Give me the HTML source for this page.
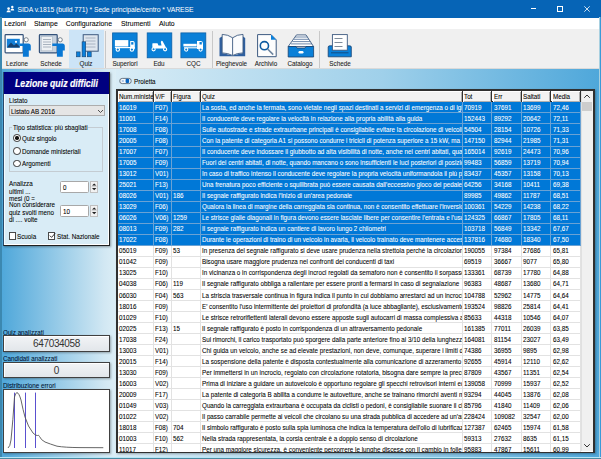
<!DOCTYPE html>
<html><head><meta charset="utf-8"><style>
*{box-sizing:border-box;margin:0;padding:0}
html,body{width:601px;height:459px;overflow:hidden;background:#0664b6}
body{position:relative;font-family:"Liberation Sans",sans-serif;color:#000}
.a{position:absolute}
.t{position:absolute;white-space:nowrap;line-height:1}
</style></head><body>

<div class="a" style="left:0;top:0;width:601px;height:17.5px;background:#0664b6"></div>
<svg class="a" style="left:5.5px;top:4.5px" width="9" height="8" viewBox="0 0 9 8"><circle cx="2.6" cy="3.6" r="1.3" fill="#fff"/><path d="M0.5 7.3 Q0.5 5.2 2.6 5.2 Q4.7 5.2 4.7 7.3Z" fill="#fff"/><circle cx="6.3" cy="2" r="1.2" fill="#fff"/><path d="M4.6 5.6 Q4.4 3.5 6.3 3.5 Q8.2 3.5 8.2 5.6Z" fill="#fff"/></svg>
<div class="t" style="left:17.5px;top:6.5px;font-size:6.8px;color:#fff;letter-spacing:-0.05px">SIDA v.1815 (build 771) * Sede principale/centro * VARESE</div>
<div class="a" style="left:531px;top:8px;width:5px;height:1px;background:#fff"></div>
<div class="a" style="left:556.5px;top:6px;width:6px;height:6px;border:0.8px solid #fff"></div>
<svg class="a" style="left:583.5px;top:5.8px" width="6" height="6" viewBox="0 0 6 6"><path d="M0.3 0.3L5.7 5.7M5.7 0.3L0.3 5.7" stroke="#fff" stroke-width="0.8"/></svg>
<div class="a" style="left:1px;top:18px;width:598px;height:441px;background:#f0f0f0"></div>
<div class="a" style="left:1px;top:17.5px;width:598px;height:11.5px;background:#fff"></div>
<div class="t" style="left:4.2px;top:21px;font-size:6.9px;color:#000;-webkit-text-stroke:0.07px #000">Lezioni</div>
<div class="t" style="left:34px;top:21px;font-size:6.9px;color:#000;-webkit-text-stroke:0.07px #000">Stampe</div>
<div class="t" style="left:65.7px;top:21px;font-size:6.9px;color:#000;-webkit-text-stroke:0.07px #000">Configurazione</div>
<div class="t" style="left:121px;top:21px;font-size:6.9px;color:#000;-webkit-text-stroke:0.07px #000">Strumenti</div>
<div class="t" style="left:159px;top:21px;font-size:6.9px;color:#000;-webkit-text-stroke:0.07px #000">Aiuto</div>
<div class="a" style="left:1px;top:29px;width:598px;height:40px;background:#f0f0f0"></div>
<div class="a" style="left:69px;top:29.5px;width:34.5px;height:39px;background:#cce4f7"></div>
<div class="a" style="left:104.5px;top:31px;width:1px;height:37px;background:#c8c8c8"></div>
<div class="a" style="left:212px;top:31px;width:1px;height:37px;background:#c8c8c8"></div>
<div class="a" style="left:318.7px;top:31px;width:1px;height:37px;background:#c8c8c8"></div>
<div class="t" style="left:-13px;width:60px;text-align:center;top:60.9px;font-size:6.3px;color:#1a1a1a;-webkit-text-stroke:0.07px #1a1a1a">Lezione</div>
<div class="t" style="left:21px;width:60px;text-align:center;top:60.9px;font-size:6.3px;color:#1a1a1a;-webkit-text-stroke:0.07px #1a1a1a">Schede</div>
<div class="t" style="left:56px;width:60px;text-align:center;top:60.9px;font-size:6.3px;color:#1a1a1a;-webkit-text-stroke:0.07px #1a1a1a">Quiz</div>
<div class="t" style="left:95px;width:60px;text-align:center;top:60.9px;font-size:6.3px;color:#1a1a1a;-webkit-text-stroke:0.07px #1a1a1a">Superiori</div>
<div class="t" style="left:129px;width:60px;text-align:center;top:60.9px;font-size:6.3px;color:#1a1a1a;-webkit-text-stroke:0.07px #1a1a1a">Edu</div>
<div class="t" style="left:163.5px;width:60px;text-align:center;top:60.9px;font-size:6.3px;color:#1a1a1a;-webkit-text-stroke:0.07px #1a1a1a">CQC</div>
<div class="t" style="left:201.5px;width:60px;text-align:center;top:60.9px;font-size:6.3px;color:#1a1a1a;-webkit-text-stroke:0.07px #1a1a1a">Pieghevole</div>
<div class="t" style="left:236px;width:60px;text-align:center;top:60.9px;font-size:6.3px;color:#1a1a1a;-webkit-text-stroke:0.07px #1a1a1a">Archivio</div>
<div class="t" style="left:270px;width:60px;text-align:center;top:60.9px;font-size:6.3px;color:#1a1a1a;-webkit-text-stroke:0.07px #1a1a1a">Catalogo</div>
<div class="t" style="left:310px;width:60px;text-align:center;top:60.9px;font-size:6.3px;color:#1a1a1a;-webkit-text-stroke:0.07px #1a1a1a">Schede</div>
<div class="a" style="left:1px;top:68px;width:598px;height:1px;background:#dadada"></div>

<svg class="a" style="left:0;top:0" width="601" height="69" viewBox="0 0 601 69">
 <!-- Lezione -->
 <rect x="5.1" y="34.7" width="18.1" height="18.2" rx="0.8" fill="#fff" stroke="#34527a" stroke-width="1.2"/>
 <rect x="6.8" y="38.8" width="13" height="8.9" fill="#1580d8"/>
 <path d="M6.9 47.6 L11 42.5 L14 45.5 L16.5 43.5 L19.6 46.5 L19.6 47.6Z" fill="#17406e"/>
 <circle cx="16" cy="41.8" r="1.1" fill="#fff"/>
 <circle cx="26.2" cy="39.8" r="2.1" fill="#fff" stroke="#6a7580" stroke-width="0.9"/>
 <path d="M19.6 43.4 H28.3 Q30.8 43.4 30.8 46 V50.5 H28.8 V56.8 H22.9 V45.9 H19.6Z" fill="#0a78d4"/>
 <!-- Schede 1 -->
 <rect x="39.4" y="34.7" width="17.8" height="18.2" rx="0.8" fill="#c9d3df" stroke="#34527a" stroke-width="1.2"/>
 <rect x="41.2" y="36.6" width="11.2" height="14.2" fill="#eef1f4" stroke="#aab6c4" stroke-width="0.6"/>
 <path d="M43 39.5H51M43 42H51M43 44.5H51M43 47H51" stroke="#8a96a6" stroke-width="0.7"/>
 <circle cx="60.2" cy="39.8" r="2.1" fill="#fff" stroke="#6a7580" stroke-width="0.9"/>
 <path d="M52.3 43.4 H62.3 Q64.8 43.4 64.8 46 V50.5 H62.8 V56.8 H56.9 V45.9 H52.3Z" fill="#0a78d4"/>
 <!-- Quiz -->
 <rect x="83.2" y="34.7" width="15" height="16.5" fill="#dfe6ee" stroke="#3d5a80" stroke-width="1"/>
 <path d="M85.5 38H95.5M85.5 41H95.5M85.5 44H95.5M85.5 47H95.5" stroke="#9aa6b6" stroke-width="0.8"/>
 <rect x="76.5" y="51.9" width="3.6" height="4.9" fill="#0a80dc" stroke="#17406e" stroke-width="0.6"/>
 <rect x="82.1" y="41.8" width="3.6" height="15" fill="#0a80dc" stroke="#17406e" stroke-width="0.6"/>
 <rect x="87.3" y="51.9" width="3.9" height="4.9" fill="#0a80dc" stroke="#17406e" stroke-width="0.6"/>
 <!-- Superiori -->
 <rect x="112.6" y="32.9" width="24.5" height="24.9" fill="#0a80d8" stroke="#0a60a8" stroke-width="0.8"/>
 <rect x="114.9" y="40.1" width="13.4" height="6.4" fill="#fff"/>
 <path d="M114.9 47.6H134.8" stroke="#fff" stroke-width="1.2"/>
 <path d="M130.2 41.1 H133 Q134.8 41.1 134.8 44 V49.2 H130.2Z" fill="#fff"/>
 <rect x="131.2" y="42.1" width="2.2" height="2.5" fill="#0a80d8"/>
 <circle cx="117.8" cy="49.6" r="1.7" fill="#0a80d8" stroke="#fff" stroke-width="1.1"/>
 <circle cx="131.9" cy="49.6" r="1.7" fill="#0a80d8" stroke="#fff" stroke-width="1.1"/>
 <!-- Edu -->
 <rect x="147.2" y="32.9" width="24.6" height="24.9" fill="#0a80d8" stroke="#0a60a8" stroke-width="0.8"/>
 <path d="M152.5 43.2 H157.5 L158.5 45.5 H161.5 L160.8 42 L161.5 40.8 L162.5 41 L165.5 46.5 L166 48.5 H152.5 Q152 45 152.5 43.2Z" fill="#fff"/>
 <circle cx="153.6" cy="49.3" r="1.6" fill="#0a80d8" stroke="#fff" stroke-width="1.1"/>
 <circle cx="165.1" cy="49.3" r="1.6" fill="#0a80d8" stroke="#fff" stroke-width="1.1"/>
 <!-- CQC -->
 <rect x="180.9" y="32.9" width="24.9" height="24.9" fill="#0a80d8" stroke="#0a60a8" stroke-width="0.8"/>
 <rect x="183.4" y="43.8" width="13.3" height="2.6" fill="#fff"/>
 <path d="M184 47.8H203" stroke="#fff" stroke-width="1.1"/>
 <path d="M197 41 H201 Q203 41 203 43.5 V49 H197Z" fill="#fff"/>
 <rect x="199.5" y="42" width="2.3" height="2.5" fill="#0a80d8"/>
 <circle cx="186.2" cy="49.6" r="1.6" fill="#0a80d8" stroke="#fff" stroke-width="1.1"/>
 <circle cx="200.6" cy="49.6" r="1.6" fill="#0a80d8" stroke="#fff" stroke-width="1.1"/>
 <!-- Pieghevole -->
 <path d="M219.5 38 L222 36.5 V53 L232.6 55.5 L243 53 V36.5 L245.2 38 V56.3 H219.5Z" fill="#2f5f9e"/>
 <path d="M222.2 34.4 Q228 34.5 232.6 37.8 Q237 34.5 243 34.4 V52.9 Q237 53 232.6 55.5 Q228 53 222.2 52.9Z" fill="#fbfcfd" stroke="#3d5a80" stroke-width="0.9"/>
 <path d="M232.6 37.8 V55.3" stroke="#3d5a80" stroke-width="0.9"/>
 <!-- Archivio -->
 <path d="M257.6 34.6 H271 L276.2 39.8 V56.7 H257.6Z" fill="#fdfdfd" stroke="#3d5a80" stroke-width="1"/>
 <path d="M271 34.6 L276.2 39.8 H271Z" fill="#0a80dc"/>
 <circle cx="264.4" cy="45.7" r="4.1" fill="none" stroke="#0d5aa0" stroke-width="1.6"/>
 <path d="M267.6 49 L273.2 54.6" stroke="#6f86a0" stroke-width="1.6"/>
 <!-- Catalogo -->
 <path d="M296.5 34.9 H306 L313.5 46.5 H288.2Z" fill="#fff" stroke="#3d5a80" stroke-width="0.9"/>
 <path d="M295 37H307.5M293.7 39.3H309M292.4 41.6H310.4M291 43.9H311.8" stroke="#4a6a96" stroke-width="0.8"/>
 <path d="M288.2 46.5 H296 L297 48 H305 L306 46.5 H313.6 V57 H288.2Z" fill="#0a80d8" stroke="#17406e" stroke-width="0.8"/>
 <rect x="298.5" y="51" width="5" height="2.5" rx="1.2" fill="#fff"/>
 <!-- Schede 2 -->
 <path d="M328.2 47 Q328.2 45.8 330 45.8 H349.5 Q351.3 45.8 351.3 47 V56.8 H328.2Z" fill="#0a80d8" stroke="#17406e" stroke-width="0.8"/>
 <rect x="332.4" y="34.6" width="14.9" height="15.6" fill="#fff" stroke="#3d5a80" stroke-width="0.9"/>
 <path d="M334.5 38.5H342.5M334.5 42.5H342.5M334.5 46.5H342.5" stroke="#6f7f90" stroke-width="0.9"/>
 <path d="M331 52.8H348.5" stroke="#17406e" stroke-width="0.8"/>
</svg>

<div class="a" style="left:116px;top:69px;width:485px;height:390px;background:linear-gradient(to right,#d8ecf6 0%,#9fd0ea 55%,#4ea7da 100%)"></div>
<div class="a" style="left:1px;top:69px;width:115px;height:390px;background:linear-gradient(to right,#4ea7da 0%,#d2e8f3 90%,#dceef6 100%)"></div>
<div class="a" style="left:0;top:17px;width:1.5px;height:442px;background:#3c88b0"></div>
<div class="a" style="left:599px;top:17px;width:1px;height:442px;background:#a8d0e0"></div><div class="a" style="left:600px;top:17px;width:1px;height:442px;background:#3a9ad8"></div>
<div class="a" style="left:3px;top:72px;width:106.7px;height:174.3px;background:#d9ecf6;border-left:1px solid #2a4a6a;border-right:1.3px solid #202020;border-bottom:1.6px solid #202020;box-shadow:inset 1px 0 0 #f4fbff,inset -1px -1px 0 #fff,1px 1px 2px rgba(0,0,0,.35)"></div>

<div class="a" style="left:4px;top:72px;width:104.5px;height:22px;background:#000080"></div>
<div class="t" style="left:15px;top:78.7px;font-size:10px;font-weight:bold;font-style:italic;transform:scaleX(0.875);transform-origin:0 0;-webkit-text-stroke:0.2px #fff;color:#fff">Lezione quiz difficili</div>
<div class="t" style="left:8.5px;top:97.56px;font-size:6.9px;transform:scaleX(0.91);transform-origin:0 0;-webkit-text-stroke:0.07px currentColor;">Listato</div>
<div class="a" style="left:8.6px;top:105px;width:96.7px;height:11.3px;background:#e5e5e5;border:1px solid #adadad"></div>
<div class="t" style="left:11px;top:109.36px;font-size:6.9px;transform:scaleX(0.91);transform-origin:0 0;-webkit-text-stroke:0.07px currentColor;">Listato AB 2016</div>
<svg class="a" style="left:97px;top:109px" width="7" height="5" viewBox="0 0 7 5"><path d="M1 1L3.5 3.5L6 1" stroke="#404040" stroke-width="0.9" fill="none"/></svg>
<div class="a" style="left:8.5px;top:126.5px;width:94.2px;height:45.8px;border:1px solid #c4ccd2"></div>
<div class="a" style="left:12px;top:124px;width:76px;height:5px;background:#d9ecf6"></div>
<div class="t" style="left:13px;top:125.46px;font-size:6.9px;transform:scaleX(0.91);transform-origin:0 0;-webkit-text-stroke:0.07px currentColor;">Tipo statistica: più sbagliati</div>
<div class="a" style="left:13.2px;top:134.2px;width:7.6px;height:7.6px;border-radius:50%;background:#fff;border:1px solid #333"></div>
<div class="a" style="left:15.3px;top:136.3px;width:3.4px;height:3.4px;border-radius:50%;background:#111"></div>
<div class="t" style="left:22px;top:135.86px;font-size:6.9px;transform:scaleX(0.91);transform-origin:0 0;-webkit-text-stroke:0.07px currentColor;">Quiz singolo</div>
<div class="a" style="left:13.2px;top:147.2px;width:7.6px;height:7.6px;border-radius:50%;background:#fff;border:1px solid #333"></div>
<div class="t" style="left:22px;top:148.86px;font-size:6.9px;transform:scaleX(0.91);transform-origin:0 0;-webkit-text-stroke:0.07px currentColor;">Domande ministeriali</div>
<div class="a" style="left:13.2px;top:159.5px;width:7.6px;height:7.6px;border-radius:50%;background:#fff;border:1px solid #333"></div>
<div class="t" style="left:22px;top:161.16px;font-size:6.9px;transform:scaleX(0.91);transform-origin:0 0;-webkit-text-stroke:0.07px currentColor;">Argomenti</div>
<div class="t" style="left:8.5px;top:181.16px;font-size:6.9px;transform:scaleX(0.91);transform-origin:0 0;-webkit-text-stroke:0.07px currentColor;">Analizza</div>
<div class="t" style="left:8.5px;top:188.96px;font-size:6.9px;transform:scaleX(0.91);transform-origin:0 0;-webkit-text-stroke:0.07px currentColor;">ultimi ...</div>
<div class="t" style="left:8.5px;top:196.16px;font-size:6.9px;transform:scaleX(0.91);transform-origin:0 0;-webkit-text-stroke:0.07px currentColor;">mesi (0 =</div>
<div class="t" style="left:8.5px;top:202.06px;font-size:6.9px;transform:scaleX(0.91);transform-origin:0 0;-webkit-text-stroke:0.07px currentColor;">Non considerare</div>
<div class="t" style="left:8.5px;top:209.86px;font-size:6.9px;transform:scaleX(0.91);transform-origin:0 0;-webkit-text-stroke:0.07px currentColor;">quiz svolti meno</div>
<div class="t" style="left:8.5px;top:217.06px;font-size:6.9px;transform:scaleX(0.91);transform-origin:0 0;-webkit-text-stroke:0.07px currentColor;">di .... volte</div>
<div class="a" style="left:60.4px;top:181.3px;width:29px;height:11.6px;background:#fff;border:1px solid #a8a8a8;border-radius:1.5px"></div>
<div class="t" style="left:63px;top:185.26px;font-size:6.9px;transform:scaleX(0.91);transform-origin:0 0;-webkit-text-stroke:0.07px currentColor;">0</div>
<div class="a" style="left:90px;top:181.3px;width:7.5px;height:11.6px;background:#f2f2f2;border:1px solid #c0c0c0"></div>
<svg class="a" style="left:90.5px;top:182.3px" width="6.5" height="10" viewBox="0 0 6.5 10"><path d="M0.5 4.5H6M0.5 4.8H6" stroke="#c8c8c8" stroke-width="0.5"/><path d="M1 3.6L3.2 1.4L5.4 3.6Z M1 6L3.2 8.2L5.4 6Z" fill="#222"/></svg>
<div class="a" style="left:60.4px;top:205.3px;width:29px;height:11.6px;background:#fff;border:1px solid #a8a8a8;border-radius:1.5px"></div>
<div class="t" style="left:63px;top:209.26px;font-size:6.9px;transform:scaleX(0.91);transform-origin:0 0;-webkit-text-stroke:0.07px currentColor;">10</div>
<div class="a" style="left:90px;top:205.3px;width:7.5px;height:11.6px;background:#f2f2f2;border:1px solid #c0c0c0"></div>
<svg class="a" style="left:90.5px;top:206.3px" width="6.5" height="10" viewBox="0 0 6.5 10"><path d="M0.5 4.5H6M0.5 4.8H6" stroke="#c8c8c8" stroke-width="0.5"/><path d="M1 3.6L3.2 1.4L5.4 3.6Z M1 6L3.2 8.2L5.4 6Z" fill="#222"/></svg>
<div class="a" style="left:8.6px;top:231.5px;width:7.7px;height:8px;background:#fff;border:0.9px solid #4a4a4a"></div>
<div class="t" style="left:17px;top:234.26px;font-size:6.9px;transform:scaleX(0.91);transform-origin:0 0;-webkit-text-stroke:0.07px currentColor;">Scuola</div>
<div class="a" style="left:47.8px;top:231.5px;width:7.7px;height:8px;background:#fff;border:0.9px solid #4a4a4a"></div>
<svg class="a" style="left:48.5px;top:232px" width="7" height="7" viewBox="0 0 7 7"><path d="M0.8 3.6L2.6 5.4L6.2 1.2" stroke="#222" stroke-width="0.9" fill="none"/></svg>
<div class="t" style="left:57px;top:234.26px;font-size:6.9px;transform:scaleX(0.91);transform-origin:0 0;-webkit-text-stroke:0.07px currentColor;">Stat. Nazionale</div>
<div class="t" style="left:2.8px;top:329.56px;font-size:6.9px;transform:scaleX(0.91);transform-origin:0 0;-webkit-text-stroke:0.07px currentColor;color:#001030">Quiz analizzati</div>
<div class="a" style="left:3px;top:335px;width:107px;height:16.5px;background:linear-gradient(#f2f4f6,#e2e6ea);border:1px solid #404040;border-right-width:1.6px;border-bottom-width:1.6px;box-shadow:inset 1px 1px 0 #fff,1px 1px 2px rgba(0,0,0,.3)"></div>
<div class="t" style="left:3px;width:107px;text-align:center;top:339.2px;font-size:10px;letter-spacing:-0.33px;color:#333">647034058</div>
<div class="t" style="left:2.8px;top:356.06px;font-size:6.9px;transform:scaleX(0.91);transform-origin:0 0;-webkit-text-stroke:0.07px currentColor;color:#001030">Candidati analizzati</div>
<div class="a" style="left:3px;top:362px;width:107px;height:15.6px;background:linear-gradient(#f2f4f6,#e2e6ea);border:1px solid #404040;border-right-width:1.6px;border-bottom-width:1.6px;box-shadow:inset 1px 1px 0 #fff,1px 1px 2px rgba(0,0,0,.3)"></div>
<div class="t" style="left:3px;width:107px;text-align:center;top:366px;font-size:10px;color:#333">0</div>
<div class="t" style="left:2.8px;top:382.96px;font-size:6.9px;transform:scaleX(0.91);transform-origin:0 0;-webkit-text-stroke:0.07px currentColor;color:#001030">Distribuzione errori</div>
<div class="a" style="left:3px;top:388.8px;width:107px;height:64.2px;background:#fff;border:1px solid #404040;border-right-width:1.6px;border-bottom-width:1.6px;box-shadow:1px 1px 2px rgba(0,0,0,.3)"></div>
<svg class="a" style="left:0;top:380px" width="115" height="79" viewBox="0 380 115 79">
<path d="M14.5 392.6V448M25.5 392.6V448M35.5 392.6V448" stroke="#5a50d0" stroke-width="1"/>
<path d="M8 448 Q10 447 11 440 Q13 420 14.5 397 Q15.5 392.5 17 392.6 Q19 393 21 400 Q23 410 25 417 Q28 427 33 433 Q36 436 37.5 435.5 Q38.5 434.5 39.5 436.5 Q41 440 45 442 Q50 444 57 446.2 Q65 447.5 80 447.6 L103.3 447.7" stroke="#555" stroke-width="0.9" fill="none"/>
</svg>
<svg class="a" style="left:118px;top:77px" width="15" height="8" viewBox="118 77 15 8"><rect x="119.8" y="78.4" width="11.4" height="5.2" rx="2.4" fill="#f4f8fb" stroke="#5a6878" stroke-width="0.9"/><rect x="125.6" y="78.7" width="3.5" height="4.4" rx="1" fill="#0864c0"/><path d="M121.8 81H123.8" stroke="#5a8ad0" stroke-width="0.9"/></svg>
<div class="t" style="left:134px;top:78.96px;font-size:6.9px;transform:scaleX(0.91);transform-origin:0 0;-webkit-text-stroke:0.07px currentColor;">Proietta</div>
<div class="a" style="left:116px;top:89px;width:479px;height:364px;background:#fff;border:2px solid #303030;border-top-width:2px;border-right-width:2px;border-bottom-width:1.5px;box-shadow:1px 1px 2px rgba(0,0,0,.3)"></div>
<div class="a" style="left:118px;top:91px;width:463px;height:360.5px;overflow:hidden">
<div class="a" style="left:0;top:11.4px;width:463px;height:11.03px;background:#0078d7;border-bottom:1px solid #6aa2d4"></div>
<div class="a" style="left:0px;top:11.4px;width:35.599999999999994px;height:11.03px;overflow:hidden;border-right:1px solid #6aa2d4"><div class="t" style="left:1px;top:2.6px;font-size:6.9px;transform:scaleX(0.91);transform-origin:0 0;-webkit-text-stroke:0.07px currentColor;color:#fff">16019</div></div>
<div class="a" style="left:35.599999999999994px;top:11.4px;width:18.099999999999994px;height:11.03px;overflow:hidden;border-right:1px solid #6aa2d4"><div class="t" style="left:1px;top:2.6px;font-size:6.9px;transform:scaleX(0.91);transform-origin:0 0;-webkit-text-stroke:0.07px currentColor;color:#fff">F07)</div></div>
<div class="a" style="left:53.69999999999999px;top:11.4px;width:29.30000000000001px;height:11.03px;overflow:hidden;border-right:1px solid #6aa2d4"><div class="t" style="left:1px;top:2.6px;font-size:6.9px;transform:scaleX(0.91);transform-origin:0 0;-webkit-text-stroke:0.07px currentColor;color:#fff"></div></div>
<div class="a" style="left:83px;top:11.4px;width:261.8px;height:11.03px;overflow:hidden;border-right:1px solid #6aa2d4"><div class="t" style="left:1px;top:2.6px;font-size:6.9px;transform:scaleX(0.91);transform-origin:0 0;-webkit-text-stroke:0.07px currentColor;color:#fff">La sosta, ed anche la fermata, sono vietate negli spazi destinati a servizi di emergenza o di igiene</div></div>
<div class="a" style="left:344.8px;top:11.4px;width:29.69999999999999px;height:11.03px;overflow:hidden;border-right:1px solid #6aa2d4"><div class="t" style="left:1px;top:2.6px;font-size:6.9px;transform:scaleX(0.91);transform-origin:0 0;-webkit-text-stroke:0.07px currentColor;color:#fff">70919</div></div>
<div class="a" style="left:374.5px;top:11.4px;width:29.299999999999955px;height:11.03px;overflow:hidden;border-right:1px solid #6aa2d4"><div class="t" style="left:1px;top:2.6px;font-size:6.9px;transform:scaleX(0.91);transform-origin:0 0;-webkit-text-stroke:0.07px currentColor;color:#fff">37691</div></div>
<div class="a" style="left:403.79999999999995px;top:11.4px;width:29.700000000000045px;height:11.03px;overflow:hidden;border-right:1px solid #6aa2d4"><div class="t" style="left:1px;top:2.6px;font-size:6.9px;transform:scaleX(0.91);transform-origin:0 0;-webkit-text-stroke:0.07px currentColor;color:#fff">13699</div></div>
<div class="a" style="left:433.5px;top:11.4px;width:29.600000000000023px;height:11.03px;overflow:hidden;border-right:1px solid #6aa2d4"><div class="t" style="left:1px;top:2.6px;font-size:6.9px;transform:scaleX(0.91);transform-origin:0 0;-webkit-text-stroke:0.07px currentColor;color:#fff">72,46</div></div>
<div class="a" style="left:0;top:22.43px;width:463px;height:11.03px;background:#0078d7;border-bottom:1px solid #6aa2d4"></div>
<div class="a" style="left:0px;top:22.43px;width:35.599999999999994px;height:11.03px;overflow:hidden;border-right:1px solid #6aa2d4"><div class="t" style="left:1px;top:2.6px;font-size:6.9px;transform:scaleX(0.91);transform-origin:0 0;-webkit-text-stroke:0.07px currentColor;color:#fff">11001</div></div>
<div class="a" style="left:35.599999999999994px;top:22.43px;width:18.099999999999994px;height:11.03px;overflow:hidden;border-right:1px solid #6aa2d4"><div class="t" style="left:1px;top:2.6px;font-size:6.9px;transform:scaleX(0.91);transform-origin:0 0;-webkit-text-stroke:0.07px currentColor;color:#fff">F14)</div></div>
<div class="a" style="left:53.69999999999999px;top:22.43px;width:29.30000000000001px;height:11.03px;overflow:hidden;border-right:1px solid #6aa2d4"><div class="t" style="left:1px;top:2.6px;font-size:6.9px;transform:scaleX(0.91);transform-origin:0 0;-webkit-text-stroke:0.07px currentColor;color:#fff"></div></div>
<div class="a" style="left:83px;top:22.43px;width:261.8px;height:11.03px;overflow:hidden;border-right:1px solid #6aa2d4"><div class="t" style="left:1px;top:2.6px;font-size:6.9px;transform:scaleX(0.91);transform-origin:0 0;-webkit-text-stroke:0.07px currentColor;color:#fff">Il conducente deve regolare la velocità in relazione alla propria abilità alla guida</div></div>
<div class="a" style="left:344.8px;top:22.43px;width:29.69999999999999px;height:11.03px;overflow:hidden;border-right:1px solid #6aa2d4"><div class="t" style="left:1px;top:2.6px;font-size:6.9px;transform:scaleX(0.91);transform-origin:0 0;-webkit-text-stroke:0.07px currentColor;color:#fff">152443</div></div>
<div class="a" style="left:374.5px;top:22.43px;width:29.299999999999955px;height:11.03px;overflow:hidden;border-right:1px solid #6aa2d4"><div class="t" style="left:1px;top:2.6px;font-size:6.9px;transform:scaleX(0.91);transform-origin:0 0;-webkit-text-stroke:0.07px currentColor;color:#fff">89292</div></div>
<div class="a" style="left:403.79999999999995px;top:22.43px;width:29.700000000000045px;height:11.03px;overflow:hidden;border-right:1px solid #6aa2d4"><div class="t" style="left:1px;top:2.6px;font-size:6.9px;transform:scaleX(0.91);transform-origin:0 0;-webkit-text-stroke:0.07px currentColor;color:#fff">20642</div></div>
<div class="a" style="left:433.5px;top:22.43px;width:29.600000000000023px;height:11.03px;overflow:hidden;border-right:1px solid #6aa2d4"><div class="t" style="left:1px;top:2.6px;font-size:6.9px;transform:scaleX(0.91);transform-origin:0 0;-webkit-text-stroke:0.07px currentColor;color:#fff">72,11</div></div>
<div class="a" style="left:0;top:33.46px;width:463px;height:11.03px;background:#0078d7;border-bottom:1px solid #6aa2d4"></div>
<div class="a" style="left:0px;top:33.46px;width:35.599999999999994px;height:11.03px;overflow:hidden;border-right:1px solid #6aa2d4"><div class="t" style="left:1px;top:2.6px;font-size:6.9px;transform:scaleX(0.91);transform-origin:0 0;-webkit-text-stroke:0.07px currentColor;color:#fff">17008</div></div>
<div class="a" style="left:35.599999999999994px;top:33.46px;width:18.099999999999994px;height:11.03px;overflow:hidden;border-right:1px solid #6aa2d4"><div class="t" style="left:1px;top:2.6px;font-size:6.9px;transform:scaleX(0.91);transform-origin:0 0;-webkit-text-stroke:0.07px currentColor;color:#fff">F08)</div></div>
<div class="a" style="left:53.69999999999999px;top:33.46px;width:29.30000000000001px;height:11.03px;overflow:hidden;border-right:1px solid #6aa2d4"><div class="t" style="left:1px;top:2.6px;font-size:6.9px;transform:scaleX(0.91);transform-origin:0 0;-webkit-text-stroke:0.07px currentColor;color:#fff"></div></div>
<div class="a" style="left:83px;top:33.46px;width:261.8px;height:11.03px;overflow:hidden;border-right:1px solid #6aa2d4"><div class="t" style="left:1px;top:2.6px;font-size:6.9px;transform:scaleX(0.91);transform-origin:0 0;-webkit-text-stroke:0.07px currentColor;color:#fff">Sulle autostrade e strade extraurbane principali è consigliabile evitare la circolazione di veicoli</div></div>
<div class="a" style="left:344.8px;top:33.46px;width:29.69999999999999px;height:11.03px;overflow:hidden;border-right:1px solid #6aa2d4"><div class="t" style="left:1px;top:2.6px;font-size:6.9px;transform:scaleX(0.91);transform-origin:0 0;-webkit-text-stroke:0.07px currentColor;color:#fff">54504</div></div>
<div class="a" style="left:374.5px;top:33.46px;width:29.299999999999955px;height:11.03px;overflow:hidden;border-right:1px solid #6aa2d4"><div class="t" style="left:1px;top:2.6px;font-size:6.9px;transform:scaleX(0.91);transform-origin:0 0;-webkit-text-stroke:0.07px currentColor;color:#fff">28154</div></div>
<div class="a" style="left:403.79999999999995px;top:33.46px;width:29.700000000000045px;height:11.03px;overflow:hidden;border-right:1px solid #6aa2d4"><div class="t" style="left:1px;top:2.6px;font-size:6.9px;transform:scaleX(0.91);transform-origin:0 0;-webkit-text-stroke:0.07px currentColor;color:#fff">10726</div></div>
<div class="a" style="left:433.5px;top:33.46px;width:29.600000000000023px;height:11.03px;overflow:hidden;border-right:1px solid #6aa2d4"><div class="t" style="left:1px;top:2.6px;font-size:6.9px;transform:scaleX(0.91);transform-origin:0 0;-webkit-text-stroke:0.07px currentColor;color:#fff">71,33</div></div>
<div class="a" style="left:0;top:44.49px;width:463px;height:11.03px;background:#0078d7;border-bottom:1px solid #6aa2d4"></div>
<div class="a" style="left:0px;top:44.49px;width:35.599999999999994px;height:11.03px;overflow:hidden;border-right:1px solid #6aa2d4"><div class="t" style="left:1px;top:2.6px;font-size:6.9px;transform:scaleX(0.91);transform-origin:0 0;-webkit-text-stroke:0.07px currentColor;color:#fff">20005</div></div>
<div class="a" style="left:35.599999999999994px;top:44.49px;width:18.099999999999994px;height:11.03px;overflow:hidden;border-right:1px solid #6aa2d4"><div class="t" style="left:1px;top:2.6px;font-size:6.9px;transform:scaleX(0.91);transform-origin:0 0;-webkit-text-stroke:0.07px currentColor;color:#fff">F08)</div></div>
<div class="a" style="left:53.69999999999999px;top:44.49px;width:29.30000000000001px;height:11.03px;overflow:hidden;border-right:1px solid #6aa2d4"><div class="t" style="left:1px;top:2.6px;font-size:6.9px;transform:scaleX(0.91);transform-origin:0 0;-webkit-text-stroke:0.07px currentColor;color:#fff"></div></div>
<div class="a" style="left:83px;top:44.49px;width:261.8px;height:11.03px;overflow:hidden;border-right:1px solid #6aa2d4"><div class="t" style="left:1px;top:2.6px;font-size:6.9px;transform:scaleX(0.91);transform-origin:0 0;-webkit-text-stroke:0.07px currentColor;color:#fff">Con la patente di categoria A1 si possono condurre i tricicli di potenza superiore a 15 kW, ma solo</div></div>
<div class="a" style="left:344.8px;top:44.49px;width:29.69999999999999px;height:11.03px;overflow:hidden;border-right:1px solid #6aa2d4"><div class="t" style="left:1px;top:2.6px;font-size:6.9px;transform:scaleX(0.91);transform-origin:0 0;-webkit-text-stroke:0.07px currentColor;color:#fff">147150</div></div>
<div class="a" style="left:374.5px;top:44.49px;width:29.299999999999955px;height:11.03px;overflow:hidden;border-right:1px solid #6aa2d4"><div class="t" style="left:1px;top:2.6px;font-size:6.9px;transform:scaleX(0.91);transform-origin:0 0;-webkit-text-stroke:0.07px currentColor;color:#fff">82944</div></div>
<div class="a" style="left:403.79999999999995px;top:44.49px;width:29.700000000000045px;height:11.03px;overflow:hidden;border-right:1px solid #6aa2d4"><div class="t" style="left:1px;top:2.6px;font-size:6.9px;transform:scaleX(0.91);transform-origin:0 0;-webkit-text-stroke:0.07px currentColor;color:#fff">21985</div></div>
<div class="a" style="left:433.5px;top:44.49px;width:29.600000000000023px;height:11.03px;overflow:hidden;border-right:1px solid #6aa2d4"><div class="t" style="left:1px;top:2.6px;font-size:6.9px;transform:scaleX(0.91);transform-origin:0 0;-webkit-text-stroke:0.07px currentColor;color:#fff">71,31</div></div>
<div class="a" style="left:0;top:55.52px;width:463px;height:11.03px;background:#0078d7;border-bottom:1px solid #6aa2d4"></div>
<div class="a" style="left:0px;top:55.52px;width:35.599999999999994px;height:11.03px;overflow:hidden;border-right:1px solid #6aa2d4"><div class="t" style="left:1px;top:2.6px;font-size:6.9px;transform:scaleX(0.91);transform-origin:0 0;-webkit-text-stroke:0.07px currentColor;color:#fff">17007</div></div>
<div class="a" style="left:35.599999999999994px;top:55.52px;width:18.099999999999994px;height:11.03px;overflow:hidden;border-right:1px solid #6aa2d4"><div class="t" style="left:1px;top:2.6px;font-size:6.9px;transform:scaleX(0.91);transform-origin:0 0;-webkit-text-stroke:0.07px currentColor;color:#fff">F07)</div></div>
<div class="a" style="left:53.69999999999999px;top:55.52px;width:29.30000000000001px;height:11.03px;overflow:hidden;border-right:1px solid #6aa2d4"><div class="t" style="left:1px;top:2.6px;font-size:6.9px;transform:scaleX(0.91);transform-origin:0 0;-webkit-text-stroke:0.07px currentColor;color:#fff"></div></div>
<div class="a" style="left:83px;top:55.52px;width:261.8px;height:11.03px;overflow:hidden;border-right:1px solid #6aa2d4"><div class="t" style="left:1px;top:2.6px;font-size:6.9px;transform:scaleX(0.91);transform-origin:0 0;-webkit-text-stroke:0.07px currentColor;color:#fff">Il conducente deve indossare il giubbotto ad alta visibilità di notte, anche nei centri abitati, quando</div></div>
<div class="a" style="left:344.8px;top:55.52px;width:29.69999999999999px;height:11.03px;overflow:hidden;border-right:1px solid #6aa2d4"><div class="t" style="left:1px;top:2.6px;font-size:6.9px;transform:scaleX(0.91);transform-origin:0 0;-webkit-text-stroke:0.07px currentColor;color:#fff">165014</div></div>
<div class="a" style="left:374.5px;top:55.52px;width:29.299999999999955px;height:11.03px;overflow:hidden;border-right:1px solid #6aa2d4"><div class="t" style="left:1px;top:2.6px;font-size:6.9px;transform:scaleX(0.91);transform-origin:0 0;-webkit-text-stroke:0.07px currentColor;color:#fff">92619</div></div>
<div class="a" style="left:403.79999999999995px;top:55.52px;width:29.700000000000045px;height:11.03px;overflow:hidden;border-right:1px solid #6aa2d4"><div class="t" style="left:1px;top:2.6px;font-size:6.9px;transform:scaleX(0.91);transform-origin:0 0;-webkit-text-stroke:0.07px currentColor;color:#fff">24473</div></div>
<div class="a" style="left:433.5px;top:55.52px;width:29.600000000000023px;height:11.03px;overflow:hidden;border-right:1px solid #6aa2d4"><div class="t" style="left:1px;top:2.6px;font-size:6.9px;transform:scaleX(0.91);transform-origin:0 0;-webkit-text-stroke:0.07px currentColor;color:#fff">70,96</div></div>
<div class="a" style="left:0;top:66.55px;width:463px;height:11.03px;background:#0078d7;border-bottom:1px solid #6aa2d4"></div>
<div class="a" style="left:0px;top:66.55px;width:35.599999999999994px;height:11.03px;overflow:hidden;border-right:1px solid #6aa2d4"><div class="t" style="left:1px;top:2.6px;font-size:6.9px;transform:scaleX(0.91);transform-origin:0 0;-webkit-text-stroke:0.07px currentColor;color:#fff">17005</div></div>
<div class="a" style="left:35.599999999999994px;top:66.55px;width:18.099999999999994px;height:11.03px;overflow:hidden;border-right:1px solid #6aa2d4"><div class="t" style="left:1px;top:2.6px;font-size:6.9px;transform:scaleX(0.91);transform-origin:0 0;-webkit-text-stroke:0.07px currentColor;color:#fff">F09)</div></div>
<div class="a" style="left:53.69999999999999px;top:66.55px;width:29.30000000000001px;height:11.03px;overflow:hidden;border-right:1px solid #6aa2d4"><div class="t" style="left:1px;top:2.6px;font-size:6.9px;transform:scaleX(0.91);transform-origin:0 0;-webkit-text-stroke:0.07px currentColor;color:#fff"></div></div>
<div class="a" style="left:83px;top:66.55px;width:261.8px;height:11.03px;overflow:hidden;border-right:1px solid #6aa2d4"><div class="t" style="left:1px;top:2.6px;font-size:6.9px;transform:scaleX(0.91);transform-origin:0 0;-webkit-text-stroke:0.07px currentColor;color:#fff">Fuori dei centri abitati, di notte, quando mancano o sono insufficienti le luci posteriori di posizione</div></div>
<div class="a" style="left:344.8px;top:66.55px;width:29.69999999999999px;height:11.03px;overflow:hidden;border-right:1px solid #6aa2d4"><div class="t" style="left:1px;top:2.6px;font-size:6.9px;transform:scaleX(0.91);transform-origin:0 0;-webkit-text-stroke:0.07px currentColor;color:#fff">99483</div></div>
<div class="a" style="left:374.5px;top:66.55px;width:29.299999999999955px;height:11.03px;overflow:hidden;border-right:1px solid #6aa2d4"><div class="t" style="left:1px;top:2.6px;font-size:6.9px;transform:scaleX(0.91);transform-origin:0 0;-webkit-text-stroke:0.07px currentColor;color:#fff">56859</div></div>
<div class="a" style="left:403.79999999999995px;top:66.55px;width:29.700000000000045px;height:11.03px;overflow:hidden;border-right:1px solid #6aa2d4"><div class="t" style="left:1px;top:2.6px;font-size:6.9px;transform:scaleX(0.91);transform-origin:0 0;-webkit-text-stroke:0.07px currentColor;color:#fff">13719</div></div>
<div class="a" style="left:433.5px;top:66.55px;width:29.600000000000023px;height:11.03px;overflow:hidden;border-right:1px solid #6aa2d4"><div class="t" style="left:1px;top:2.6px;font-size:6.9px;transform:scaleX(0.91);transform-origin:0 0;-webkit-text-stroke:0.07px currentColor;color:#fff">70,94</div></div>
<div class="a" style="left:0;top:77.58px;width:463px;height:11.03px;background:#0078d7;border-bottom:1px solid #6aa2d4"></div>
<div class="a" style="left:0px;top:77.58px;width:35.599999999999994px;height:11.03px;overflow:hidden;border-right:1px solid #6aa2d4"><div class="t" style="left:1px;top:2.6px;font-size:6.9px;transform:scaleX(0.91);transform-origin:0 0;-webkit-text-stroke:0.07px currentColor;color:#fff">13012</div></div>
<div class="a" style="left:35.599999999999994px;top:77.58px;width:18.099999999999994px;height:11.03px;overflow:hidden;border-right:1px solid #6aa2d4"><div class="t" style="left:1px;top:2.6px;font-size:6.9px;transform:scaleX(0.91);transform-origin:0 0;-webkit-text-stroke:0.07px currentColor;color:#fff">V01)</div></div>
<div class="a" style="left:53.69999999999999px;top:77.58px;width:29.30000000000001px;height:11.03px;overflow:hidden;border-right:1px solid #6aa2d4"><div class="t" style="left:1px;top:2.6px;font-size:6.9px;transform:scaleX(0.91);transform-origin:0 0;-webkit-text-stroke:0.07px currentColor;color:#fff"></div></div>
<div class="a" style="left:83px;top:77.58px;width:261.8px;height:11.03px;overflow:hidden;border-right:1px solid #6aa2d4"><div class="t" style="left:1px;top:2.6px;font-size:6.9px;transform:scaleX(0.91);transform-origin:0 0;-webkit-text-stroke:0.07px currentColor;color:#fff">In caso di traffico intenso il conducente deve regolare la propria velocità uniformandola il più possibile</div></div>
<div class="a" style="left:344.8px;top:77.58px;width:29.69999999999999px;height:11.03px;overflow:hidden;border-right:1px solid #6aa2d4"><div class="t" style="left:1px;top:2.6px;font-size:6.9px;transform:scaleX(0.91);transform-origin:0 0;-webkit-text-stroke:0.07px currentColor;color:#fff">83437</div></div>
<div class="a" style="left:374.5px;top:77.58px;width:29.299999999999955px;height:11.03px;overflow:hidden;border-right:1px solid #6aa2d4"><div class="t" style="left:1px;top:2.6px;font-size:6.9px;transform:scaleX(0.91);transform-origin:0 0;-webkit-text-stroke:0.07px currentColor;color:#fff">45357</div></div>
<div class="a" style="left:403.79999999999995px;top:77.58px;width:29.700000000000045px;height:11.03px;overflow:hidden;border-right:1px solid #6aa2d4"><div class="t" style="left:1px;top:2.6px;font-size:6.9px;transform:scaleX(0.91);transform-origin:0 0;-webkit-text-stroke:0.07px currentColor;color:#fff">13158</div></div>
<div class="a" style="left:433.5px;top:77.58px;width:29.600000000000023px;height:11.03px;overflow:hidden;border-right:1px solid #6aa2d4"><div class="t" style="left:1px;top:2.6px;font-size:6.9px;transform:scaleX(0.91);transform-origin:0 0;-webkit-text-stroke:0.07px currentColor;color:#fff">70,13</div></div>
<div class="a" style="left:0;top:88.61px;width:463px;height:11.03px;background:#0078d7;border-bottom:1px solid #6aa2d4"></div>
<div class="a" style="left:0px;top:88.61px;width:35.599999999999994px;height:11.03px;overflow:hidden;border-right:1px solid #6aa2d4"><div class="t" style="left:1px;top:2.6px;font-size:6.9px;transform:scaleX(0.91);transform-origin:0 0;-webkit-text-stroke:0.07px currentColor;color:#fff">25021</div></div>
<div class="a" style="left:35.599999999999994px;top:88.61px;width:18.099999999999994px;height:11.03px;overflow:hidden;border-right:1px solid #6aa2d4"><div class="t" style="left:1px;top:2.6px;font-size:6.9px;transform:scaleX(0.91);transform-origin:0 0;-webkit-text-stroke:0.07px currentColor;color:#fff">F13)</div></div>
<div class="a" style="left:53.69999999999999px;top:88.61px;width:29.30000000000001px;height:11.03px;overflow:hidden;border-right:1px solid #6aa2d4"><div class="t" style="left:1px;top:2.6px;font-size:6.9px;transform:scaleX(0.91);transform-origin:0 0;-webkit-text-stroke:0.07px currentColor;color:#fff"></div></div>
<div class="a" style="left:83px;top:88.61px;width:261.8px;height:11.03px;overflow:hidden;border-right:1px solid #6aa2d4"><div class="t" style="left:1px;top:2.6px;font-size:6.9px;transform:scaleX(0.91);transform-origin:0 0;-webkit-text-stroke:0.07px currentColor;color:#fff">Una frenatura poco efficiente o squilibrata può essere causata dall'eccessivo gioco del pedale</div></div>
<div class="a" style="left:344.8px;top:88.61px;width:29.69999999999999px;height:11.03px;overflow:hidden;border-right:1px solid #6aa2d4"><div class="t" style="left:1px;top:2.6px;font-size:6.9px;transform:scaleX(0.91);transform-origin:0 0;-webkit-text-stroke:0.07px currentColor;color:#fff">64256</div></div>
<div class="a" style="left:374.5px;top:88.61px;width:29.299999999999955px;height:11.03px;overflow:hidden;border-right:1px solid #6aa2d4"><div class="t" style="left:1px;top:2.6px;font-size:6.9px;transform:scaleX(0.91);transform-origin:0 0;-webkit-text-stroke:0.07px currentColor;color:#fff">34168</div></div>
<div class="a" style="left:403.79999999999995px;top:88.61px;width:29.700000000000045px;height:11.03px;overflow:hidden;border-right:1px solid #6aa2d4"><div class="t" style="left:1px;top:2.6px;font-size:6.9px;transform:scaleX(0.91);transform-origin:0 0;-webkit-text-stroke:0.07px currentColor;color:#fff">10411</div></div>
<div class="a" style="left:433.5px;top:88.61px;width:29.600000000000023px;height:11.03px;overflow:hidden;border-right:1px solid #6aa2d4"><div class="t" style="left:1px;top:2.6px;font-size:6.9px;transform:scaleX(0.91);transform-origin:0 0;-webkit-text-stroke:0.07px currentColor;color:#fff">69,38</div></div>
<div class="a" style="left:0;top:99.64px;width:463px;height:11.03px;background:#0078d7;border-bottom:1px solid #6aa2d4"></div>
<div class="a" style="left:0px;top:99.64px;width:35.599999999999994px;height:11.03px;overflow:hidden;border-right:1px solid #6aa2d4"><div class="t" style="left:1px;top:2.6px;font-size:6.9px;transform:scaleX(0.91);transform-origin:0 0;-webkit-text-stroke:0.07px currentColor;color:#fff">08026</div></div>
<div class="a" style="left:35.599999999999994px;top:99.64px;width:18.099999999999994px;height:11.03px;overflow:hidden;border-right:1px solid #6aa2d4"><div class="t" style="left:1px;top:2.6px;font-size:6.9px;transform:scaleX(0.91);transform-origin:0 0;-webkit-text-stroke:0.07px currentColor;color:#fff">V01)</div></div>
<div class="a" style="left:53.69999999999999px;top:99.64px;width:29.30000000000001px;height:11.03px;overflow:hidden;border-right:1px solid #6aa2d4"><div class="t" style="left:1px;top:2.6px;font-size:6.9px;transform:scaleX(0.91);transform-origin:0 0;-webkit-text-stroke:0.07px currentColor;color:#fff">186</div></div>
<div class="a" style="left:83px;top:99.64px;width:261.8px;height:11.03px;overflow:hidden;border-right:1px solid #6aa2d4"><div class="t" style="left:1px;top:2.6px;font-size:6.9px;transform:scaleX(0.91);transform-origin:0 0;-webkit-text-stroke:0.07px currentColor;color:#fff">Il segnale raffigurato indica l'inizio di un'area pedonale</div></div>
<div class="a" style="left:344.8px;top:99.64px;width:29.69999999999999px;height:11.03px;overflow:hidden;border-right:1px solid #6aa2d4"><div class="t" style="left:1px;top:2.6px;font-size:6.9px;transform:scaleX(0.91);transform-origin:0 0;-webkit-text-stroke:0.07px currentColor;color:#fff">89985</div></div>
<div class="a" style="left:374.5px;top:99.64px;width:29.299999999999955px;height:11.03px;overflow:hidden;border-right:1px solid #6aa2d4"><div class="t" style="left:1px;top:2.6px;font-size:6.9px;transform:scaleX(0.91);transform-origin:0 0;-webkit-text-stroke:0.07px currentColor;color:#fff">49862</div></div>
<div class="a" style="left:403.79999999999995px;top:99.64px;width:29.700000000000045px;height:11.03px;overflow:hidden;border-right:1px solid #6aa2d4"><div class="t" style="left:1px;top:2.6px;font-size:6.9px;transform:scaleX(0.91);transform-origin:0 0;-webkit-text-stroke:0.07px currentColor;color:#fff">11787</div></div>
<div class="a" style="left:433.5px;top:99.64px;width:29.600000000000023px;height:11.03px;overflow:hidden;border-right:1px solid #6aa2d4"><div class="t" style="left:1px;top:2.6px;font-size:6.9px;transform:scaleX(0.91);transform-origin:0 0;-webkit-text-stroke:0.07px currentColor;color:#fff">68,51</div></div>
<div class="a" style="left:0;top:110.67px;width:463px;height:11.03px;background:#0078d7;border-bottom:1px solid #6aa2d4"></div>
<div class="a" style="left:0px;top:110.67px;width:35.599999999999994px;height:11.03px;overflow:hidden;border-right:1px solid #6aa2d4"><div class="t" style="left:1px;top:2.6px;font-size:6.9px;transform:scaleX(0.91);transform-origin:0 0;-webkit-text-stroke:0.07px currentColor;color:#fff">13029</div></div>
<div class="a" style="left:35.599999999999994px;top:110.67px;width:18.099999999999994px;height:11.03px;overflow:hidden;border-right:1px solid #6aa2d4"><div class="t" style="left:1px;top:2.6px;font-size:6.9px;transform:scaleX(0.91);transform-origin:0 0;-webkit-text-stroke:0.07px currentColor;color:#fff">F06)</div></div>
<div class="a" style="left:53.69999999999999px;top:110.67px;width:29.30000000000001px;height:11.03px;overflow:hidden;border-right:1px solid #6aa2d4"><div class="t" style="left:1px;top:2.6px;font-size:6.9px;transform:scaleX(0.91);transform-origin:0 0;-webkit-text-stroke:0.07px currentColor;color:#fff"></div></div>
<div class="a" style="left:83px;top:110.67px;width:261.8px;height:11.03px;overflow:hidden;border-right:1px solid #6aa2d4"><div class="t" style="left:1px;top:2.6px;font-size:6.9px;transform:scaleX(0.91);transform-origin:0 0;-webkit-text-stroke:0.07px currentColor;color:#fff">Qualora la linea di margine della carreggiata sia continua, non è consentito effettuare l'inversione</div></div>
<div class="a" style="left:344.8px;top:110.67px;width:29.69999999999999px;height:11.03px;overflow:hidden;border-right:1px solid #6aa2d4"><div class="t" style="left:1px;top:2.6px;font-size:6.9px;transform:scaleX(0.91);transform-origin:0 0;-webkit-text-stroke:0.07px currentColor;color:#fff">100361</div></div>
<div class="a" style="left:374.5px;top:110.67px;width:29.299999999999955px;height:11.03px;overflow:hidden;border-right:1px solid #6aa2d4"><div class="t" style="left:1px;top:2.6px;font-size:6.9px;transform:scaleX(0.91);transform-origin:0 0;-webkit-text-stroke:0.07px currentColor;color:#fff">54229</div></div>
<div class="a" style="left:403.79999999999995px;top:110.67px;width:29.700000000000045px;height:11.03px;overflow:hidden;border-right:1px solid #6aa2d4"><div class="t" style="left:1px;top:2.6px;font-size:6.9px;transform:scaleX(0.91);transform-origin:0 0;-webkit-text-stroke:0.07px currentColor;color:#fff">14238</div></div>
<div class="a" style="left:433.5px;top:110.67px;width:29.600000000000023px;height:11.03px;overflow:hidden;border-right:1px solid #6aa2d4"><div class="t" style="left:1px;top:2.6px;font-size:6.9px;transform:scaleX(0.91);transform-origin:0 0;-webkit-text-stroke:0.07px currentColor;color:#fff">68,22</div></div>
<div class="a" style="left:0;top:121.7px;width:463px;height:11.03px;background:#0078d7;border-bottom:1px solid #6aa2d4"></div>
<div class="a" style="left:0px;top:121.7px;width:35.599999999999994px;height:11.03px;overflow:hidden;border-right:1px solid #6aa2d4"><div class="t" style="left:1px;top:2.6px;font-size:6.9px;transform:scaleX(0.91);transform-origin:0 0;-webkit-text-stroke:0.07px currentColor;color:#fff">06026</div></div>
<div class="a" style="left:35.599999999999994px;top:121.7px;width:18.099999999999994px;height:11.03px;overflow:hidden;border-right:1px solid #6aa2d4"><div class="t" style="left:1px;top:2.6px;font-size:6.9px;transform:scaleX(0.91);transform-origin:0 0;-webkit-text-stroke:0.07px currentColor;color:#fff">V06)</div></div>
<div class="a" style="left:53.69999999999999px;top:121.7px;width:29.30000000000001px;height:11.03px;overflow:hidden;border-right:1px solid #6aa2d4"><div class="t" style="left:1px;top:2.6px;font-size:6.9px;transform:scaleX(0.91);transform-origin:0 0;-webkit-text-stroke:0.07px currentColor;color:#fff">1259</div></div>
<div class="a" style="left:83px;top:121.7px;width:261.8px;height:11.03px;overflow:hidden;border-right:1px solid #6aa2d4"><div class="t" style="left:1px;top:2.6px;font-size:6.9px;transform:scaleX(0.91);transform-origin:0 0;-webkit-text-stroke:0.07px currentColor;color:#fff">Le strisce gialle diagonali in figura devono essere lasciate libere per consentire l'entrata e l'uscita</div></div>
<div class="a" style="left:344.8px;top:121.7px;width:29.69999999999999px;height:11.03px;overflow:hidden;border-right:1px solid #6aa2d4"><div class="t" style="left:1px;top:2.6px;font-size:6.9px;transform:scaleX(0.91);transform-origin:0 0;-webkit-text-stroke:0.07px currentColor;color:#fff">124325</div></div>
<div class="a" style="left:374.5px;top:121.7px;width:29.299999999999955px;height:11.03px;overflow:hidden;border-right:1px solid #6aa2d4"><div class="t" style="left:1px;top:2.6px;font-size:6.9px;transform:scaleX(0.91);transform-origin:0 0;-webkit-text-stroke:0.07px currentColor;color:#fff">66867</div></div>
<div class="a" style="left:403.79999999999995px;top:121.7px;width:29.700000000000045px;height:11.03px;overflow:hidden;border-right:1px solid #6aa2d4"><div class="t" style="left:1px;top:2.6px;font-size:6.9px;transform:scaleX(0.91);transform-origin:0 0;-webkit-text-stroke:0.07px currentColor;color:#fff">17805</div></div>
<div class="a" style="left:433.5px;top:121.7px;width:29.600000000000023px;height:11.03px;overflow:hidden;border-right:1px solid #6aa2d4"><div class="t" style="left:1px;top:2.6px;font-size:6.9px;transform:scaleX(0.91);transform-origin:0 0;-webkit-text-stroke:0.07px currentColor;color:#fff">68,11</div></div>
<div class="a" style="left:0;top:132.73px;width:463px;height:11.03px;background:#0078d7;border-bottom:1px solid #6aa2d4"></div>
<div class="a" style="left:0px;top:132.73px;width:35.599999999999994px;height:11.03px;overflow:hidden;border-right:1px solid #6aa2d4"><div class="t" style="left:1px;top:2.6px;font-size:6.9px;transform:scaleX(0.91);transform-origin:0 0;-webkit-text-stroke:0.07px currentColor;color:#fff">08013</div></div>
<div class="a" style="left:35.599999999999994px;top:132.73px;width:18.099999999999994px;height:11.03px;overflow:hidden;border-right:1px solid #6aa2d4"><div class="t" style="left:1px;top:2.6px;font-size:6.9px;transform:scaleX(0.91);transform-origin:0 0;-webkit-text-stroke:0.07px currentColor;color:#fff">F09)</div></div>
<div class="a" style="left:53.69999999999999px;top:132.73px;width:29.30000000000001px;height:11.03px;overflow:hidden;border-right:1px solid #6aa2d4"><div class="t" style="left:1px;top:2.6px;font-size:6.9px;transform:scaleX(0.91);transform-origin:0 0;-webkit-text-stroke:0.07px currentColor;color:#fff">282</div></div>
<div class="a" style="left:83px;top:132.73px;width:261.8px;height:11.03px;overflow:hidden;border-right:1px solid #6aa2d4"><div class="t" style="left:1px;top:2.6px;font-size:6.9px;transform:scaleX(0.91);transform-origin:0 0;-webkit-text-stroke:0.07px currentColor;color:#fff">Il segnale raffigurato indica un cantiere di lavoro lungo 2 chilometri</div></div>
<div class="a" style="left:344.8px;top:132.73px;width:29.69999999999999px;height:11.03px;overflow:hidden;border-right:1px solid #6aa2d4"><div class="t" style="left:1px;top:2.6px;font-size:6.9px;transform:scaleX(0.91);transform-origin:0 0;-webkit-text-stroke:0.07px currentColor;color:#fff">103718</div></div>
<div class="a" style="left:374.5px;top:132.73px;width:29.299999999999955px;height:11.03px;overflow:hidden;border-right:1px solid #6aa2d4"><div class="t" style="left:1px;top:2.6px;font-size:6.9px;transform:scaleX(0.91);transform-origin:0 0;-webkit-text-stroke:0.07px currentColor;color:#fff">56849</div></div>
<div class="a" style="left:403.79999999999995px;top:132.73px;width:29.700000000000045px;height:11.03px;overflow:hidden;border-right:1px solid #6aa2d4"><div class="t" style="left:1px;top:2.6px;font-size:6.9px;transform:scaleX(0.91);transform-origin:0 0;-webkit-text-stroke:0.07px currentColor;color:#fff">13342</div></div>
<div class="a" style="left:433.5px;top:132.73px;width:29.600000000000023px;height:11.03px;overflow:hidden;border-right:1px solid #6aa2d4"><div class="t" style="left:1px;top:2.6px;font-size:6.9px;transform:scaleX(0.91);transform-origin:0 0;-webkit-text-stroke:0.07px currentColor;color:#fff">67,67</div></div>
<div class="a" style="left:0;top:143.76px;width:463px;height:11.03px;background:#0078d7;border-bottom:1px solid #6aa2d4"></div>
<div class="a" style="left:0px;top:143.76px;width:35.599999999999994px;height:11.03px;overflow:hidden;border-right:1px solid #6aa2d4"><div class="t" style="left:1px;top:2.6px;font-size:6.9px;transform:scaleX(0.91);transform-origin:0 0;-webkit-text-stroke:0.07px currentColor;color:#fff">17022</div></div>
<div class="a" style="left:35.599999999999994px;top:143.76px;width:18.099999999999994px;height:11.03px;overflow:hidden;border-right:1px solid #6aa2d4"><div class="t" style="left:1px;top:2.6px;font-size:6.9px;transform:scaleX(0.91);transform-origin:0 0;-webkit-text-stroke:0.07px currentColor;color:#fff">F08)</div></div>
<div class="a" style="left:53.69999999999999px;top:143.76px;width:29.30000000000001px;height:11.03px;overflow:hidden;border-right:1px solid #6aa2d4"><div class="t" style="left:1px;top:2.6px;font-size:6.9px;transform:scaleX(0.91);transform-origin:0 0;-webkit-text-stroke:0.07px currentColor;color:#fff"></div></div>
<div class="a" style="left:83px;top:143.76px;width:261.8px;height:11.03px;overflow:hidden;border-right:1px solid #6aa2d4"><div class="t" style="left:1px;top:2.6px;font-size:6.9px;transform:scaleX(0.91);transform-origin:0 0;-webkit-text-stroke:0.07px currentColor;color:#fff">Durante le operazioni di traino di un veicolo in avaria, il veicolo trainato deve mantenere accesi</div></div>
<div class="a" style="left:344.8px;top:143.76px;width:29.69999999999999px;height:11.03px;overflow:hidden;border-right:1px solid #6aa2d4"><div class="t" style="left:1px;top:2.6px;font-size:6.9px;transform:scaleX(0.91);transform-origin:0 0;-webkit-text-stroke:0.07px currentColor;color:#fff">137816</div></div>
<div class="a" style="left:374.5px;top:143.76px;width:29.299999999999955px;height:11.03px;overflow:hidden;border-right:1px solid #6aa2d4"><div class="t" style="left:1px;top:2.6px;font-size:6.9px;transform:scaleX(0.91);transform-origin:0 0;-webkit-text-stroke:0.07px currentColor;color:#fff">74680</div></div>
<div class="a" style="left:403.79999999999995px;top:143.76px;width:29.700000000000045px;height:11.03px;overflow:hidden;border-right:1px solid #6aa2d4"><div class="t" style="left:1px;top:2.6px;font-size:6.9px;transform:scaleX(0.91);transform-origin:0 0;-webkit-text-stroke:0.07px currentColor;color:#fff">18340</div></div>
<div class="a" style="left:433.5px;top:143.76px;width:29.600000000000023px;height:11.03px;overflow:hidden;border-right:1px solid #6aa2d4"><div class="t" style="left:1px;top:2.6px;font-size:6.9px;transform:scaleX(0.91);transform-origin:0 0;-webkit-text-stroke:0.07px currentColor;color:#fff">67,50</div></div>
<div class="a" style="left:0;top:154.79px;width:463px;height:11.03px;background:#fff;border-bottom:1px solid #e2e2e2"></div>
<div class="a" style="left:0px;top:154.79px;width:35.599999999999994px;height:11.03px;overflow:hidden;border-right:1px solid #e2e2e2"><div class="t" style="left:1px;top:2.6px;font-size:6.9px;transform:scaleX(0.91);transform-origin:0 0;-webkit-text-stroke:0.07px currentColor;color:#000">05019</div></div>
<div class="a" style="left:35.599999999999994px;top:154.79px;width:18.099999999999994px;height:11.03px;overflow:hidden;border-right:1px solid #e2e2e2"><div class="t" style="left:1px;top:2.6px;font-size:6.9px;transform:scaleX(0.91);transform-origin:0 0;-webkit-text-stroke:0.07px currentColor;color:#000">F09)</div></div>
<div class="a" style="left:53.69999999999999px;top:154.79px;width:29.30000000000001px;height:11.03px;overflow:hidden;border-right:1px solid #e2e2e2"><div class="t" style="left:1px;top:2.6px;font-size:6.9px;transform:scaleX(0.91);transform-origin:0 0;-webkit-text-stroke:0.07px currentColor;color:#000">53</div></div>
<div class="a" style="left:83px;top:154.79px;width:261.8px;height:11.03px;overflow:hidden;border-right:1px solid #e2e2e2"><div class="t" style="left:1px;top:2.6px;font-size:6.9px;transform:scaleX(0.91);transform-origin:0 0;-webkit-text-stroke:0.07px currentColor;color:#000">In presenza del segnale raffigurato si deve usare prudenza nella strettoia perché la circolazione</div></div>
<div class="a" style="left:344.8px;top:154.79px;width:29.69999999999999px;height:11.03px;overflow:hidden;border-right:1px solid #e2e2e2"><div class="t" style="left:1px;top:2.6px;font-size:6.9px;transform:scaleX(0.91);transform-origin:0 0;-webkit-text-stroke:0.07px currentColor;color:#000">190055</div></div>
<div class="a" style="left:374.5px;top:154.79px;width:29.299999999999955px;height:11.03px;overflow:hidden;border-right:1px solid #e2e2e2"><div class="t" style="left:1px;top:2.6px;font-size:6.9px;transform:scaleX(0.91);transform-origin:0 0;-webkit-text-stroke:0.07px currentColor;color:#000">97384</div></div>
<div class="a" style="left:403.79999999999995px;top:154.79px;width:29.700000000000045px;height:11.03px;overflow:hidden;border-right:1px solid #e2e2e2"><div class="t" style="left:1px;top:2.6px;font-size:6.9px;transform:scaleX(0.91);transform-origin:0 0;-webkit-text-stroke:0.07px currentColor;color:#000">27686</div></div>
<div class="a" style="left:433.5px;top:154.79px;width:29.600000000000023px;height:11.03px;overflow:hidden;border-right:1px solid #e2e2e2"><div class="t" style="left:1px;top:2.6px;font-size:6.9px;transform:scaleX(0.91);transform-origin:0 0;-webkit-text-stroke:0.07px currentColor;color:#000">65,81</div></div>
<div class="a" style="left:0;top:165.82px;width:463px;height:11.03px;background:#fff;border-bottom:1px solid #e2e2e2"></div>
<div class="a" style="left:0px;top:165.82px;width:35.599999999999994px;height:11.03px;overflow:hidden;border-right:1px solid #e2e2e2"><div class="t" style="left:1px;top:2.6px;font-size:6.9px;transform:scaleX(0.91);transform-origin:0 0;-webkit-text-stroke:0.07px currentColor;color:#000">01042</div></div>
<div class="a" style="left:35.599999999999994px;top:165.82px;width:18.099999999999994px;height:11.03px;overflow:hidden;border-right:1px solid #e2e2e2"><div class="t" style="left:1px;top:2.6px;font-size:6.9px;transform:scaleX(0.91);transform-origin:0 0;-webkit-text-stroke:0.07px currentColor;color:#000">F09)</div></div>
<div class="a" style="left:53.69999999999999px;top:165.82px;width:29.30000000000001px;height:11.03px;overflow:hidden;border-right:1px solid #e2e2e2"><div class="t" style="left:1px;top:2.6px;font-size:6.9px;transform:scaleX(0.91);transform-origin:0 0;-webkit-text-stroke:0.07px currentColor;color:#000"></div></div>
<div class="a" style="left:83px;top:165.82px;width:261.8px;height:11.03px;overflow:hidden;border-right:1px solid #e2e2e2"><div class="t" style="left:1px;top:2.6px;font-size:6.9px;transform:scaleX(0.91);transform-origin:0 0;-webkit-text-stroke:0.07px currentColor;color:#000">Bisogna usare maggiore prudenza nei confronti dei conducenti di taxi</div></div>
<div class="a" style="left:344.8px;top:165.82px;width:29.69999999999999px;height:11.03px;overflow:hidden;border-right:1px solid #e2e2e2"><div class="t" style="left:1px;top:2.6px;font-size:6.9px;transform:scaleX(0.91);transform-origin:0 0;-webkit-text-stroke:0.07px currentColor;color:#000">69519</div></div>
<div class="a" style="left:374.5px;top:165.82px;width:29.299999999999955px;height:11.03px;overflow:hidden;border-right:1px solid #e2e2e2"><div class="t" style="left:1px;top:2.6px;font-size:6.9px;transform:scaleX(0.91);transform-origin:0 0;-webkit-text-stroke:0.07px currentColor;color:#000">36667</div></div>
<div class="a" style="left:403.79999999999995px;top:165.82px;width:29.700000000000045px;height:11.03px;overflow:hidden;border-right:1px solid #e2e2e2"><div class="t" style="left:1px;top:2.6px;font-size:6.9px;transform:scaleX(0.91);transform-origin:0 0;-webkit-text-stroke:0.07px currentColor;color:#000">9077</div></div>
<div class="a" style="left:433.5px;top:165.82px;width:29.600000000000023px;height:11.03px;overflow:hidden;border-right:1px solid #e2e2e2"><div class="t" style="left:1px;top:2.6px;font-size:6.9px;transform:scaleX(0.91);transform-origin:0 0;-webkit-text-stroke:0.07px currentColor;color:#000">65,80</div></div>
<div class="a" style="left:0;top:176.85px;width:463px;height:11.03px;background:#fff;border-bottom:1px solid #e2e2e2"></div>
<div class="a" style="left:0px;top:176.85px;width:35.599999999999994px;height:11.03px;overflow:hidden;border-right:1px solid #e2e2e2"><div class="t" style="left:1px;top:2.6px;font-size:6.9px;transform:scaleX(0.91);transform-origin:0 0;-webkit-text-stroke:0.07px currentColor;color:#000">13025</div></div>
<div class="a" style="left:35.599999999999994px;top:176.85px;width:18.099999999999994px;height:11.03px;overflow:hidden;border-right:1px solid #e2e2e2"><div class="t" style="left:1px;top:2.6px;font-size:6.9px;transform:scaleX(0.91);transform-origin:0 0;-webkit-text-stroke:0.07px currentColor;color:#000">F10)</div></div>
<div class="a" style="left:53.69999999999999px;top:176.85px;width:29.30000000000001px;height:11.03px;overflow:hidden;border-right:1px solid #e2e2e2"><div class="t" style="left:1px;top:2.6px;font-size:6.9px;transform:scaleX(0.91);transform-origin:0 0;-webkit-text-stroke:0.07px currentColor;color:#000"></div></div>
<div class="a" style="left:83px;top:176.85px;width:261.8px;height:11.03px;overflow:hidden;border-right:1px solid #e2e2e2"><div class="t" style="left:1px;top:2.6px;font-size:6.9px;transform:scaleX(0.91);transform-origin:0 0;-webkit-text-stroke:0.07px currentColor;color:#000">In vicinanza o in corrispondenza degli incroci regolati da semaforo non è consentito il sorpasso</div></div>
<div class="a" style="left:344.8px;top:176.85px;width:29.69999999999999px;height:11.03px;overflow:hidden;border-right:1px solid #e2e2e2"><div class="t" style="left:1px;top:2.6px;font-size:6.9px;transform:scaleX(0.91);transform-origin:0 0;-webkit-text-stroke:0.07px currentColor;color:#000">133361</div></div>
<div class="a" style="left:374.5px;top:176.85px;width:29.299999999999955px;height:11.03px;overflow:hidden;border-right:1px solid #e2e2e2"><div class="t" style="left:1px;top:2.6px;font-size:6.9px;transform:scaleX(0.91);transform-origin:0 0;-webkit-text-stroke:0.07px currentColor;color:#000">68739</div></div>
<div class="a" style="left:403.79999999999995px;top:176.85px;width:29.700000000000045px;height:11.03px;overflow:hidden;border-right:1px solid #e2e2e2"><div class="t" style="left:1px;top:2.6px;font-size:6.9px;transform:scaleX(0.91);transform-origin:0 0;-webkit-text-stroke:0.07px currentColor;color:#000">17780</div></div>
<div class="a" style="left:433.5px;top:176.85px;width:29.600000000000023px;height:11.03px;overflow:hidden;border-right:1px solid #e2e2e2"><div class="t" style="left:1px;top:2.6px;font-size:6.9px;transform:scaleX(0.91);transform-origin:0 0;-webkit-text-stroke:0.07px currentColor;color:#000">64,88</div></div>
<div class="a" style="left:0;top:187.88px;width:463px;height:11.03px;background:#fff;border-bottom:1px solid #e2e2e2"></div>
<div class="a" style="left:0px;top:187.88px;width:35.599999999999994px;height:11.03px;overflow:hidden;border-right:1px solid #e2e2e2"><div class="t" style="left:1px;top:2.6px;font-size:6.9px;transform:scaleX(0.91);transform-origin:0 0;-webkit-text-stroke:0.07px currentColor;color:#000">04038</div></div>
<div class="a" style="left:35.599999999999994px;top:187.88px;width:18.099999999999994px;height:11.03px;overflow:hidden;border-right:1px solid #e2e2e2"><div class="t" style="left:1px;top:2.6px;font-size:6.9px;transform:scaleX(0.91);transform-origin:0 0;-webkit-text-stroke:0.07px currentColor;color:#000">F06)</div></div>
<div class="a" style="left:53.69999999999999px;top:187.88px;width:29.30000000000001px;height:11.03px;overflow:hidden;border-right:1px solid #e2e2e2"><div class="t" style="left:1px;top:2.6px;font-size:6.9px;transform:scaleX(0.91);transform-origin:0 0;-webkit-text-stroke:0.07px currentColor;color:#000">119</div></div>
<div class="a" style="left:83px;top:187.88px;width:261.8px;height:11.03px;overflow:hidden;border-right:1px solid #e2e2e2"><div class="t" style="left:1px;top:2.6px;font-size:6.9px;transform:scaleX(0.91);transform-origin:0 0;-webkit-text-stroke:0.07px currentColor;color:#000">Il segnale raffigurato obbliga a rallentare per essere pronti a fermarsi in caso di segnalazione</div></div>
<div class="a" style="left:344.8px;top:187.88px;width:29.69999999999999px;height:11.03px;overflow:hidden;border-right:1px solid #e2e2e2"><div class="t" style="left:1px;top:2.6px;font-size:6.9px;transform:scaleX(0.91);transform-origin:0 0;-webkit-text-stroke:0.07px currentColor;color:#000">96383</div></div>
<div class="a" style="left:374.5px;top:187.88px;width:29.299999999999955px;height:11.03px;overflow:hidden;border-right:1px solid #e2e2e2"><div class="t" style="left:1px;top:2.6px;font-size:6.9px;transform:scaleX(0.91);transform-origin:0 0;-webkit-text-stroke:0.07px currentColor;color:#000">48687</div></div>
<div class="a" style="left:403.79999999999995px;top:187.88px;width:29.700000000000045px;height:11.03px;overflow:hidden;border-right:1px solid #e2e2e2"><div class="t" style="left:1px;top:2.6px;font-size:6.9px;transform:scaleX(0.91);transform-origin:0 0;-webkit-text-stroke:0.07px currentColor;color:#000">13680</div></div>
<div class="a" style="left:433.5px;top:187.88px;width:29.600000000000023px;height:11.03px;overflow:hidden;border-right:1px solid #e2e2e2"><div class="t" style="left:1px;top:2.6px;font-size:6.9px;transform:scaleX(0.91);transform-origin:0 0;-webkit-text-stroke:0.07px currentColor;color:#000">64,71</div></div>
<div class="a" style="left:0;top:198.91px;width:463px;height:11.03px;background:#fff;border-bottom:1px solid #e2e2e2"></div>
<div class="a" style="left:0px;top:198.91px;width:35.599999999999994px;height:11.03px;overflow:hidden;border-right:1px solid #e2e2e2"><div class="t" style="left:1px;top:2.6px;font-size:6.9px;transform:scaleX(0.91);transform-origin:0 0;-webkit-text-stroke:0.07px currentColor;color:#000">06030</div></div>
<div class="a" style="left:35.599999999999994px;top:198.91px;width:18.099999999999994px;height:11.03px;overflow:hidden;border-right:1px solid #e2e2e2"><div class="t" style="left:1px;top:2.6px;font-size:6.9px;transform:scaleX(0.91);transform-origin:0 0;-webkit-text-stroke:0.07px currentColor;color:#000">F04)</div></div>
<div class="a" style="left:53.69999999999999px;top:198.91px;width:29.30000000000001px;height:11.03px;overflow:hidden;border-right:1px solid #e2e2e2"><div class="t" style="left:1px;top:2.6px;font-size:6.9px;transform:scaleX(0.91);transform-origin:0 0;-webkit-text-stroke:0.07px currentColor;color:#000">563</div></div>
<div class="a" style="left:83px;top:198.91px;width:261.8px;height:11.03px;overflow:hidden;border-right:1px solid #e2e2e2"><div class="t" style="left:1px;top:2.6px;font-size:6.9px;transform:scaleX(0.91);transform-origin:0 0;-webkit-text-stroke:0.07px currentColor;color:#000">La striscia trasversale continua in figura indica il punto in cui dobbiamo arrestarci ad un incrocio</div></div>
<div class="a" style="left:344.8px;top:198.91px;width:29.69999999999999px;height:11.03px;overflow:hidden;border-right:1px solid #e2e2e2"><div class="t" style="left:1px;top:2.6px;font-size:6.9px;transform:scaleX(0.91);transform-origin:0 0;-webkit-text-stroke:0.07px currentColor;color:#000">104788</div></div>
<div class="a" style="left:374.5px;top:198.91px;width:29.299999999999955px;height:11.03px;overflow:hidden;border-right:1px solid #e2e2e2"><div class="t" style="left:1px;top:2.6px;font-size:6.9px;transform:scaleX(0.91);transform-origin:0 0;-webkit-text-stroke:0.07px currentColor;color:#000">52962</div></div>
<div class="a" style="left:403.79999999999995px;top:198.91px;width:29.700000000000045px;height:11.03px;overflow:hidden;border-right:1px solid #e2e2e2"><div class="t" style="left:1px;top:2.6px;font-size:6.9px;transform:scaleX(0.91);transform-origin:0 0;-webkit-text-stroke:0.07px currentColor;color:#000">14775</div></div>
<div class="a" style="left:433.5px;top:198.91px;width:29.600000000000023px;height:11.03px;overflow:hidden;border-right:1px solid #e2e2e2"><div class="t" style="left:1px;top:2.6px;font-size:6.9px;transform:scaleX(0.91);transform-origin:0 0;-webkit-text-stroke:0.07px currentColor;color:#000">64,64</div></div>
<div class="a" style="left:0;top:209.94px;width:463px;height:11.03px;background:#fff;border-bottom:1px solid #e2e2e2"></div>
<div class="a" style="left:0px;top:209.94px;width:35.599999999999994px;height:11.03px;overflow:hidden;border-right:1px solid #e2e2e2"><div class="t" style="left:1px;top:2.6px;font-size:6.9px;transform:scaleX(0.91);transform-origin:0 0;-webkit-text-stroke:0.07px currentColor;color:#000">18016</div></div>
<div class="a" style="left:35.599999999999994px;top:209.94px;width:18.099999999999994px;height:11.03px;overflow:hidden;border-right:1px solid #e2e2e2"><div class="t" style="left:1px;top:2.6px;font-size:6.9px;transform:scaleX(0.91);transform-origin:0 0;-webkit-text-stroke:0.07px currentColor;color:#000">F09)</div></div>
<div class="a" style="left:53.69999999999999px;top:209.94px;width:29.30000000000001px;height:11.03px;overflow:hidden;border-right:1px solid #e2e2e2"><div class="t" style="left:1px;top:2.6px;font-size:6.9px;transform:scaleX(0.91);transform-origin:0 0;-webkit-text-stroke:0.07px currentColor;color:#000"></div></div>
<div class="a" style="left:83px;top:209.94px;width:261.8px;height:11.03px;overflow:hidden;border-right:1px solid #e2e2e2"><div class="t" style="left:1px;top:2.6px;font-size:6.9px;transform:scaleX(0.91);transform-origin:0 0;-webkit-text-stroke:0.07px currentColor;color:#000">E' consentito l'uso intermittente dei proiettori di profondità (a luce abbagliante), esclusivamente</div></div>
<div class="a" style="left:344.8px;top:209.94px;width:29.69999999999999px;height:11.03px;overflow:hidden;border-right:1px solid #e2e2e2"><div class="t" style="left:1px;top:2.6px;font-size:6.9px;transform:scaleX(0.91);transform-origin:0 0;-webkit-text-stroke:0.07px currentColor;color:#000">193524</div></div>
<div class="a" style="left:374.5px;top:209.94px;width:29.299999999999955px;height:11.03px;overflow:hidden;border-right:1px solid #e2e2e2"><div class="t" style="left:1px;top:2.6px;font-size:6.9px;transform:scaleX(0.91);transform-origin:0 0;-webkit-text-stroke:0.07px currentColor;color:#000">98826</div></div>
<div class="a" style="left:403.79999999999995px;top:209.94px;width:29.700000000000045px;height:11.03px;overflow:hidden;border-right:1px solid #e2e2e2"><div class="t" style="left:1px;top:2.6px;font-size:6.9px;transform:scaleX(0.91);transform-origin:0 0;-webkit-text-stroke:0.07px currentColor;color:#000">25814</div></div>
<div class="a" style="left:433.5px;top:209.94px;width:29.600000000000023px;height:11.03px;overflow:hidden;border-right:1px solid #e2e2e2"><div class="t" style="left:1px;top:2.6px;font-size:6.9px;transform:scaleX(0.91);transform-origin:0 0;-webkit-text-stroke:0.07px currentColor;color:#000">64,41</div></div>
<div class="a" style="left:0;top:220.97px;width:463px;height:11.03px;background:#fff;border-bottom:1px solid #e2e2e2"></div>
<div class="a" style="left:0px;top:220.97px;width:35.599999999999994px;height:11.03px;overflow:hidden;border-right:1px solid #e2e2e2"><div class="t" style="left:1px;top:2.6px;font-size:6.9px;transform:scaleX(0.91);transform-origin:0 0;-webkit-text-stroke:0.07px currentColor;color:#000">01029</div></div>
<div class="a" style="left:35.599999999999994px;top:220.97px;width:18.099999999999994px;height:11.03px;overflow:hidden;border-right:1px solid #e2e2e2"><div class="t" style="left:1px;top:2.6px;font-size:6.9px;transform:scaleX(0.91);transform-origin:0 0;-webkit-text-stroke:0.07px currentColor;color:#000">F10)</div></div>
<div class="a" style="left:53.69999999999999px;top:220.97px;width:29.30000000000001px;height:11.03px;overflow:hidden;border-right:1px solid #e2e2e2"><div class="t" style="left:1px;top:2.6px;font-size:6.9px;transform:scaleX(0.91);transform-origin:0 0;-webkit-text-stroke:0.07px currentColor;color:#000"></div></div>
<div class="a" style="left:83px;top:220.97px;width:261.8px;height:11.03px;overflow:hidden;border-right:1px solid #e2e2e2"><div class="t" style="left:1px;top:2.6px;font-size:6.9px;transform:scaleX(0.91);transform-origin:0 0;-webkit-text-stroke:0.07px currentColor;color:#000">Le strisce retroriflettenti laterali devono essere apposte sugli autocarri di massa complessiva a</div></div>
<div class="a" style="left:344.8px;top:220.97px;width:29.69999999999999px;height:11.03px;overflow:hidden;border-right:1px solid #e2e2e2"><div class="t" style="left:1px;top:2.6px;font-size:6.9px;transform:scaleX(0.91);transform-origin:0 0;-webkit-text-stroke:0.07px currentColor;color:#000">85633</div></div>
<div class="a" style="left:374.5px;top:220.97px;width:29.299999999999955px;height:11.03px;overflow:hidden;border-right:1px solid #e2e2e2"><div class="t" style="left:1px;top:2.6px;font-size:6.9px;transform:scaleX(0.91);transform-origin:0 0;-webkit-text-stroke:0.07px currentColor;color:#000">44318</div></div>
<div class="a" style="left:403.79999999999995px;top:220.97px;width:29.700000000000045px;height:11.03px;overflow:hidden;border-right:1px solid #e2e2e2"><div class="t" style="left:1px;top:2.6px;font-size:6.9px;transform:scaleX(0.91);transform-origin:0 0;-webkit-text-stroke:0.07px currentColor;color:#000">10546</div></div>
<div class="a" style="left:433.5px;top:220.97px;width:29.600000000000023px;height:11.03px;overflow:hidden;border-right:1px solid #e2e2e2"><div class="t" style="left:1px;top:2.6px;font-size:6.9px;transform:scaleX(0.91);transform-origin:0 0;-webkit-text-stroke:0.07px currentColor;color:#000">64,07</div></div>
<div class="a" style="left:0;top:232.0px;width:463px;height:11.03px;background:#fff;border-bottom:1px solid #e2e2e2"></div>
<div class="a" style="left:0px;top:232.0px;width:35.599999999999994px;height:11.03px;overflow:hidden;border-right:1px solid #e2e2e2"><div class="t" style="left:1px;top:2.6px;font-size:6.9px;transform:scaleX(0.91);transform-origin:0 0;-webkit-text-stroke:0.07px currentColor;color:#000">02025</div></div>
<div class="a" style="left:35.599999999999994px;top:232.0px;width:18.099999999999994px;height:11.03px;overflow:hidden;border-right:1px solid #e2e2e2"><div class="t" style="left:1px;top:2.6px;font-size:6.9px;transform:scaleX(0.91);transform-origin:0 0;-webkit-text-stroke:0.07px currentColor;color:#000">F13)</div></div>
<div class="a" style="left:53.69999999999999px;top:232.0px;width:29.30000000000001px;height:11.03px;overflow:hidden;border-right:1px solid #e2e2e2"><div class="t" style="left:1px;top:2.6px;font-size:6.9px;transform:scaleX(0.91);transform-origin:0 0;-webkit-text-stroke:0.07px currentColor;color:#000">15</div></div>
<div class="a" style="left:83px;top:232.0px;width:261.8px;height:11.03px;overflow:hidden;border-right:1px solid #e2e2e2"><div class="t" style="left:1px;top:2.6px;font-size:6.9px;transform:scaleX(0.91);transform-origin:0 0;-webkit-text-stroke:0.07px currentColor;color:#000">Il segnale raffigurato è posto in corrispondenza di un attraversamento pedonale</div></div>
<div class="a" style="left:344.8px;top:232.0px;width:29.69999999999999px;height:11.03px;overflow:hidden;border-right:1px solid #e2e2e2"><div class="t" style="left:1px;top:2.6px;font-size:6.9px;transform:scaleX(0.91);transform-origin:0 0;-webkit-text-stroke:0.07px currentColor;color:#000">161385</div></div>
<div class="a" style="left:374.5px;top:232.0px;width:29.299999999999955px;height:11.03px;overflow:hidden;border-right:1px solid #e2e2e2"><div class="t" style="left:1px;top:2.6px;font-size:6.9px;transform:scaleX(0.91);transform-origin:0 0;-webkit-text-stroke:0.07px currentColor;color:#000">77011</div></div>
<div class="a" style="left:403.79999999999995px;top:232.0px;width:29.700000000000045px;height:11.03px;overflow:hidden;border-right:1px solid #e2e2e2"><div class="t" style="left:1px;top:2.6px;font-size:6.9px;transform:scaleX(0.91);transform-origin:0 0;-webkit-text-stroke:0.07px currentColor;color:#000">26039</div></div>
<div class="a" style="left:433.5px;top:232.0px;width:29.600000000000023px;height:11.03px;overflow:hidden;border-right:1px solid #e2e2e2"><div class="t" style="left:1px;top:2.6px;font-size:6.9px;transform:scaleX(0.91);transform-origin:0 0;-webkit-text-stroke:0.07px currentColor;color:#000">63,85</div></div>
<div class="a" style="left:0;top:243.03px;width:463px;height:11.03px;background:#fff;border-bottom:1px solid #e2e2e2"></div>
<div class="a" style="left:0px;top:243.03px;width:35.599999999999994px;height:11.03px;overflow:hidden;border-right:1px solid #e2e2e2"><div class="t" style="left:1px;top:2.6px;font-size:6.9px;transform:scaleX(0.91);transform-origin:0 0;-webkit-text-stroke:0.07px currentColor;color:#000">17038</div></div>
<div class="a" style="left:35.599999999999994px;top:243.03px;width:18.099999999999994px;height:11.03px;overflow:hidden;border-right:1px solid #e2e2e2"><div class="t" style="left:1px;top:2.6px;font-size:6.9px;transform:scaleX(0.91);transform-origin:0 0;-webkit-text-stroke:0.07px currentColor;color:#000">F24)</div></div>
<div class="a" style="left:53.69999999999999px;top:243.03px;width:29.30000000000001px;height:11.03px;overflow:hidden;border-right:1px solid #e2e2e2"><div class="t" style="left:1px;top:2.6px;font-size:6.9px;transform:scaleX(0.91);transform-origin:0 0;-webkit-text-stroke:0.07px currentColor;color:#000"></div></div>
<div class="a" style="left:83px;top:243.03px;width:261.8px;height:11.03px;overflow:hidden;border-right:1px solid #e2e2e2"><div class="t" style="left:1px;top:2.6px;font-size:6.9px;transform:scaleX(0.91);transform-origin:0 0;-webkit-text-stroke:0.07px currentColor;color:#000">Sui rimorchi, il carico trasportato può sporgere dalla parte anteriore fino ai 3/10 della lunghezza</div></div>
<div class="a" style="left:344.8px;top:243.03px;width:29.69999999999999px;height:11.03px;overflow:hidden;border-right:1px solid #e2e2e2"><div class="t" style="left:1px;top:2.6px;font-size:6.9px;transform:scaleX(0.91);transform-origin:0 0;-webkit-text-stroke:0.07px currentColor;color:#000">164081</div></div>
<div class="a" style="left:374.5px;top:243.03px;width:29.299999999999955px;height:11.03px;overflow:hidden;border-right:1px solid #e2e2e2"><div class="t" style="left:1px;top:2.6px;font-size:6.9px;transform:scaleX(0.91);transform-origin:0 0;-webkit-text-stroke:0.07px currentColor;color:#000">81154</div></div>
<div class="a" style="left:403.79999999999995px;top:243.03px;width:29.700000000000045px;height:11.03px;overflow:hidden;border-right:1px solid #e2e2e2"><div class="t" style="left:1px;top:2.6px;font-size:6.9px;transform:scaleX(0.91);transform-origin:0 0;-webkit-text-stroke:0.07px currentColor;color:#000">23027</div></div>
<div class="a" style="left:433.5px;top:243.03px;width:29.600000000000023px;height:11.03px;overflow:hidden;border-right:1px solid #e2e2e2"><div class="t" style="left:1px;top:2.6px;font-size:6.9px;transform:scaleX(0.91);transform-origin:0 0;-webkit-text-stroke:0.07px currentColor;color:#000">63,49</div></div>
<div class="a" style="left:0;top:254.06px;width:463px;height:11.03px;background:#fff;border-bottom:1px solid #e2e2e2"></div>
<div class="a" style="left:0px;top:254.06px;width:35.599999999999994px;height:11.03px;overflow:hidden;border-right:1px solid #e2e2e2"><div class="t" style="left:1px;top:2.6px;font-size:6.9px;transform:scaleX(0.91);transform-origin:0 0;-webkit-text-stroke:0.07px currentColor;color:#000">13003</div></div>
<div class="a" style="left:35.599999999999994px;top:254.06px;width:18.099999999999994px;height:11.03px;overflow:hidden;border-right:1px solid #e2e2e2"><div class="t" style="left:1px;top:2.6px;font-size:6.9px;transform:scaleX(0.91);transform-origin:0 0;-webkit-text-stroke:0.07px currentColor;color:#000">V01)</div></div>
<div class="a" style="left:53.69999999999999px;top:254.06px;width:29.30000000000001px;height:11.03px;overflow:hidden;border-right:1px solid #e2e2e2"><div class="t" style="left:1px;top:2.6px;font-size:6.9px;transform:scaleX(0.91);transform-origin:0 0;-webkit-text-stroke:0.07px currentColor;color:#000"></div></div>
<div class="a" style="left:83px;top:254.06px;width:261.8px;height:11.03px;overflow:hidden;border-right:1px solid #e2e2e2"><div class="t" style="left:1px;top:2.6px;font-size:6.9px;transform:scaleX(0.91);transform-origin:0 0;-webkit-text-stroke:0.07px currentColor;color:#000">Chi guida un veicolo, anche se ad elevate prestazioni, non deve, comunque, superare i limiti di</div></div>
<div class="a" style="left:344.8px;top:254.06px;width:29.69999999999999px;height:11.03px;overflow:hidden;border-right:1px solid #e2e2e2"><div class="t" style="left:1px;top:2.6px;font-size:6.9px;transform:scaleX(0.91);transform-origin:0 0;-webkit-text-stroke:0.07px currentColor;color:#000">74386</div></div>
<div class="a" style="left:374.5px;top:254.06px;width:29.299999999999955px;height:11.03px;overflow:hidden;border-right:1px solid #e2e2e2"><div class="t" style="left:1px;top:2.6px;font-size:6.9px;transform:scaleX(0.91);transform-origin:0 0;-webkit-text-stroke:0.07px currentColor;color:#000">36955</div></div>
<div class="a" style="left:403.79999999999995px;top:254.06px;width:29.700000000000045px;height:11.03px;overflow:hidden;border-right:1px solid #e2e2e2"><div class="t" style="left:1px;top:2.6px;font-size:6.9px;transform:scaleX(0.91);transform-origin:0 0;-webkit-text-stroke:0.07px currentColor;color:#000">9895</div></div>
<div class="a" style="left:433.5px;top:254.06px;width:29.600000000000023px;height:11.03px;overflow:hidden;border-right:1px solid #e2e2e2"><div class="t" style="left:1px;top:2.6px;font-size:6.9px;transform:scaleX(0.91);transform-origin:0 0;-webkit-text-stroke:0.07px currentColor;color:#000">62,98</div></div>
<div class="a" style="left:0;top:265.09px;width:463px;height:11.03px;background:#fff;border-bottom:1px solid #e2e2e2"></div>
<div class="a" style="left:0px;top:265.09px;width:35.599999999999994px;height:11.03px;overflow:hidden;border-right:1px solid #e2e2e2"><div class="t" style="left:1px;top:2.6px;font-size:6.9px;transform:scaleX(0.91);transform-origin:0 0;-webkit-text-stroke:0.07px currentColor;color:#000">20015</div></div>
<div class="a" style="left:35.599999999999994px;top:265.09px;width:18.099999999999994px;height:11.03px;overflow:hidden;border-right:1px solid #e2e2e2"><div class="t" style="left:1px;top:2.6px;font-size:6.9px;transform:scaleX(0.91);transform-origin:0 0;-webkit-text-stroke:0.07px currentColor;color:#000">F14)</div></div>
<div class="a" style="left:53.69999999999999px;top:265.09px;width:29.30000000000001px;height:11.03px;overflow:hidden;border-right:1px solid #e2e2e2"><div class="t" style="left:1px;top:2.6px;font-size:6.9px;transform:scaleX(0.91);transform-origin:0 0;-webkit-text-stroke:0.07px currentColor;color:#000"></div></div>
<div class="a" style="left:83px;top:265.09px;width:261.8px;height:11.03px;overflow:hidden;border-right:1px solid #e2e2e2"><div class="t" style="left:1px;top:2.6px;font-size:6.9px;transform:scaleX(0.91);transform-origin:0 0;-webkit-text-stroke:0.07px currentColor;color:#000">La sospensione della patente è disposta contestualmente alla comunicazione di azzeramento del</div></div>
<div class="a" style="left:344.8px;top:265.09px;width:29.69999999999999px;height:11.03px;overflow:hidden;border-right:1px solid #e2e2e2"><div class="t" style="left:1px;top:2.6px;font-size:6.9px;transform:scaleX(0.91);transform-origin:0 0;-webkit-text-stroke:0.07px currentColor;color:#000">92655</div></div>
<div class="a" style="left:374.5px;top:265.09px;width:29.299999999999955px;height:11.03px;overflow:hidden;border-right:1px solid #e2e2e2"><div class="t" style="left:1px;top:2.6px;font-size:6.9px;transform:scaleX(0.91);transform-origin:0 0;-webkit-text-stroke:0.07px currentColor;color:#000">45914</div></div>
<div class="a" style="left:403.79999999999995px;top:265.09px;width:29.700000000000045px;height:11.03px;overflow:hidden;border-right:1px solid #e2e2e2"><div class="t" style="left:1px;top:2.6px;font-size:6.9px;transform:scaleX(0.91);transform-origin:0 0;-webkit-text-stroke:0.07px currentColor;color:#000">12110</div></div>
<div class="a" style="left:433.5px;top:265.09px;width:29.600000000000023px;height:11.03px;overflow:hidden;border-right:1px solid #e2e2e2"><div class="t" style="left:1px;top:2.6px;font-size:6.9px;transform:scaleX(0.91);transform-origin:0 0;-webkit-text-stroke:0.07px currentColor;color:#000">62,62</div></div>
<div class="a" style="left:0;top:276.12px;width:463px;height:11.03px;background:#fff;border-bottom:1px solid #e2e2e2"></div>
<div class="a" style="left:0px;top:276.12px;width:35.599999999999994px;height:11.03px;overflow:hidden;border-right:1px solid #e2e2e2"><div class="t" style="left:1px;top:2.6px;font-size:6.9px;transform:scaleX(0.91);transform-origin:0 0;-webkit-text-stroke:0.07px currentColor;color:#000">13030</div></div>
<div class="a" style="left:35.599999999999994px;top:276.12px;width:18.099999999999994px;height:11.03px;overflow:hidden;border-right:1px solid #e2e2e2"><div class="t" style="left:1px;top:2.6px;font-size:6.9px;transform:scaleX(0.91);transform-origin:0 0;-webkit-text-stroke:0.07px currentColor;color:#000">F09)</div></div>
<div class="a" style="left:53.69999999999999px;top:276.12px;width:29.30000000000001px;height:11.03px;overflow:hidden;border-right:1px solid #e2e2e2"><div class="t" style="left:1px;top:2.6px;font-size:6.9px;transform:scaleX(0.91);transform-origin:0 0;-webkit-text-stroke:0.07px currentColor;color:#000"></div></div>
<div class="a" style="left:83px;top:276.12px;width:261.8px;height:11.03px;overflow:hidden;border-right:1px solid #e2e2e2"><div class="t" style="left:1px;top:2.6px;font-size:6.9px;transform:scaleX(0.91);transform-origin:0 0;-webkit-text-stroke:0.07px currentColor;color:#000">Per immettersi in un incrocio, regolato con circolazione rotatoria, bisogna dare sempre la precedenza</div></div>
<div class="a" style="left:344.8px;top:276.12px;width:29.69999999999999px;height:11.03px;overflow:hidden;border-right:1px solid #e2e2e2"><div class="t" style="left:1px;top:2.6px;font-size:6.9px;transform:scaleX(0.91);transform-origin:0 0;-webkit-text-stroke:0.07px currentColor;color:#000">87809</div></div>
<div class="a" style="left:374.5px;top:276.12px;width:29.299999999999955px;height:11.03px;overflow:hidden;border-right:1px solid #e2e2e2"><div class="t" style="left:1px;top:2.6px;font-size:6.9px;transform:scaleX(0.91);transform-origin:0 0;-webkit-text-stroke:0.07px currentColor;color:#000">43567</div></div>
<div class="a" style="left:403.79999999999995px;top:276.12px;width:29.700000000000045px;height:11.03px;overflow:hidden;border-right:1px solid #e2e2e2"><div class="t" style="left:1px;top:2.6px;font-size:6.9px;transform:scaleX(0.91);transform-origin:0 0;-webkit-text-stroke:0.07px currentColor;color:#000">11351</div></div>
<div class="a" style="left:433.5px;top:276.12px;width:29.600000000000023px;height:11.03px;overflow:hidden;border-right:1px solid #e2e2e2"><div class="t" style="left:1px;top:2.6px;font-size:6.9px;transform:scaleX(0.91);transform-origin:0 0;-webkit-text-stroke:0.07px currentColor;color:#000">62,54</div></div>
<div class="a" style="left:0;top:287.15px;width:463px;height:11.03px;background:#fff;border-bottom:1px solid #e2e2e2"></div>
<div class="a" style="left:0px;top:287.15px;width:35.599999999999994px;height:11.03px;overflow:hidden;border-right:1px solid #e2e2e2"><div class="t" style="left:1px;top:2.6px;font-size:6.9px;transform:scaleX(0.91);transform-origin:0 0;-webkit-text-stroke:0.07px currentColor;color:#000">16003</div></div>
<div class="a" style="left:35.599999999999994px;top:287.15px;width:18.099999999999994px;height:11.03px;overflow:hidden;border-right:1px solid #e2e2e2"><div class="t" style="left:1px;top:2.6px;font-size:6.9px;transform:scaleX(0.91);transform-origin:0 0;-webkit-text-stroke:0.07px currentColor;color:#000">V02)</div></div>
<div class="a" style="left:53.69999999999999px;top:287.15px;width:29.30000000000001px;height:11.03px;overflow:hidden;border-right:1px solid #e2e2e2"><div class="t" style="left:1px;top:2.6px;font-size:6.9px;transform:scaleX(0.91);transform-origin:0 0;-webkit-text-stroke:0.07px currentColor;color:#000"></div></div>
<div class="a" style="left:83px;top:287.15px;width:261.8px;height:11.03px;overflow:hidden;border-right:1px solid #e2e2e2"><div class="t" style="left:1px;top:2.6px;font-size:6.9px;transform:scaleX(0.91);transform-origin:0 0;-webkit-text-stroke:0.07px currentColor;color:#000">Prima di iniziare a guidare un autoveicolo è opportuno regolare gli specchi retrovisori interni ed</div></div>
<div class="a" style="left:344.8px;top:287.15px;width:29.69999999999999px;height:11.03px;overflow:hidden;border-right:1px solid #e2e2e2"><div class="t" style="left:1px;top:2.6px;font-size:6.9px;transform:scaleX(0.91);transform-origin:0 0;-webkit-text-stroke:0.07px currentColor;color:#000">139058</div></div>
<div class="a" style="left:374.5px;top:287.15px;width:29.299999999999955px;height:11.03px;overflow:hidden;border-right:1px solid #e2e2e2"><div class="t" style="left:1px;top:2.6px;font-size:6.9px;transform:scaleX(0.91);transform-origin:0 0;-webkit-text-stroke:0.07px currentColor;color:#000">70999</div></div>
<div class="a" style="left:403.79999999999995px;top:287.15px;width:29.700000000000045px;height:11.03px;overflow:hidden;border-right:1px solid #e2e2e2"><div class="t" style="left:1px;top:2.6px;font-size:6.9px;transform:scaleX(0.91);transform-origin:0 0;-webkit-text-stroke:0.07px currentColor;color:#000">15937</div></div>
<div class="a" style="left:433.5px;top:287.15px;width:29.600000000000023px;height:11.03px;overflow:hidden;border-right:1px solid #e2e2e2"><div class="t" style="left:1px;top:2.6px;font-size:6.9px;transform:scaleX(0.91);transform-origin:0 0;-webkit-text-stroke:0.07px currentColor;color:#000">62,52</div></div>
<div class="a" style="left:0;top:298.18px;width:463px;height:11.03px;background:#fff;border-bottom:1px solid #e2e2e2"></div>
<div class="a" style="left:0px;top:298.18px;width:35.599999999999994px;height:11.03px;overflow:hidden;border-right:1px solid #e2e2e2"><div class="t" style="left:1px;top:2.6px;font-size:6.9px;transform:scaleX(0.91);transform-origin:0 0;-webkit-text-stroke:0.07px currentColor;color:#000">20009</div></div>
<div class="a" style="left:35.599999999999994px;top:298.18px;width:18.099999999999994px;height:11.03px;overflow:hidden;border-right:1px solid #e2e2e2"><div class="t" style="left:1px;top:2.6px;font-size:6.9px;transform:scaleX(0.91);transform-origin:0 0;-webkit-text-stroke:0.07px currentColor;color:#000">F17)</div></div>
<div class="a" style="left:53.69999999999999px;top:298.18px;width:29.30000000000001px;height:11.03px;overflow:hidden;border-right:1px solid #e2e2e2"><div class="t" style="left:1px;top:2.6px;font-size:6.9px;transform:scaleX(0.91);transform-origin:0 0;-webkit-text-stroke:0.07px currentColor;color:#000"></div></div>
<div class="a" style="left:83px;top:298.18px;width:261.8px;height:11.03px;overflow:hidden;border-right:1px solid #e2e2e2"><div class="t" style="left:1px;top:2.6px;font-size:6.9px;transform:scaleX(0.91);transform-origin:0 0;-webkit-text-stroke:0.07px currentColor;color:#000">La patente di categoria B abilita a condurre le autovetture, anche se trainano rimorchi aventi massa</div></div>
<div class="a" style="left:344.8px;top:298.18px;width:29.69999999999999px;height:11.03px;overflow:hidden;border-right:1px solid #e2e2e2"><div class="t" style="left:1px;top:2.6px;font-size:6.9px;transform:scaleX(0.91);transform-origin:0 0;-webkit-text-stroke:0.07px currentColor;color:#000">93294</div></div>
<div class="a" style="left:374.5px;top:298.18px;width:29.299999999999955px;height:11.03px;overflow:hidden;border-right:1px solid #e2e2e2"><div class="t" style="left:1px;top:2.6px;font-size:6.9px;transform:scaleX(0.91);transform-origin:0 0;-webkit-text-stroke:0.07px currentColor;color:#000">44045</div></div>
<div class="a" style="left:403.79999999999995px;top:298.18px;width:29.700000000000045px;height:11.03px;overflow:hidden;border-right:1px solid #e2e2e2"><div class="t" style="left:1px;top:2.6px;font-size:6.9px;transform:scaleX(0.91);transform-origin:0 0;-webkit-text-stroke:0.07px currentColor;color:#000">13876</div></div>
<div class="a" style="left:433.5px;top:298.18px;width:29.600000000000023px;height:11.03px;overflow:hidden;border-right:1px solid #e2e2e2"><div class="t" style="left:1px;top:2.6px;font-size:6.9px;transform:scaleX(0.91);transform-origin:0 0;-webkit-text-stroke:0.07px currentColor;color:#000">62,08</div></div>
<div class="a" style="left:0;top:309.21px;width:463px;height:11.03px;background:#fff;border-bottom:1px solid #e2e2e2"></div>
<div class="a" style="left:0px;top:309.21px;width:35.599999999999994px;height:11.03px;overflow:hidden;border-right:1px solid #e2e2e2"><div class="t" style="left:1px;top:2.6px;font-size:6.9px;transform:scaleX(0.91);transform-origin:0 0;-webkit-text-stroke:0.07px currentColor;color:#000">01049</div></div>
<div class="a" style="left:35.599999999999994px;top:309.21px;width:18.099999999999994px;height:11.03px;overflow:hidden;border-right:1px solid #e2e2e2"><div class="t" style="left:1px;top:2.6px;font-size:6.9px;transform:scaleX(0.91);transform-origin:0 0;-webkit-text-stroke:0.07px currentColor;color:#000">V03)</div></div>
<div class="a" style="left:53.69999999999999px;top:309.21px;width:29.30000000000001px;height:11.03px;overflow:hidden;border-right:1px solid #e2e2e2"><div class="t" style="left:1px;top:2.6px;font-size:6.9px;transform:scaleX(0.91);transform-origin:0 0;-webkit-text-stroke:0.07px currentColor;color:#000"></div></div>
<div class="a" style="left:83px;top:309.21px;width:261.8px;height:11.03px;overflow:hidden;border-right:1px solid #e2e2e2"><div class="t" style="left:1px;top:2.6px;font-size:6.9px;transform:scaleX(0.91);transform-origin:0 0;-webkit-text-stroke:0.07px currentColor;color:#000">Quando la carreggiata extraurbana è occupata da ciclisti o pedoni, è consigliabile suonare il clacson</div></div>
<div class="a" style="left:344.8px;top:309.21px;width:29.69999999999999px;height:11.03px;overflow:hidden;border-right:1px solid #e2e2e2"><div class="t" style="left:1px;top:2.6px;font-size:6.9px;transform:scaleX(0.91);transform-origin:0 0;-webkit-text-stroke:0.07px currentColor;color:#000">85796</div></div>
<div class="a" style="left:374.5px;top:309.21px;width:29.299999999999955px;height:11.03px;overflow:hidden;border-right:1px solid #e2e2e2"><div class="t" style="left:1px;top:2.6px;font-size:6.9px;transform:scaleX(0.91);transform-origin:0 0;-webkit-text-stroke:0.07px currentColor;color:#000">41840</div></div>
<div class="a" style="left:403.79999999999995px;top:309.21px;width:29.700000000000045px;height:11.03px;overflow:hidden;border-right:1px solid #e2e2e2"><div class="t" style="left:1px;top:2.6px;font-size:6.9px;transform:scaleX(0.91);transform-origin:0 0;-webkit-text-stroke:0.07px currentColor;color:#000">11409</div></div>
<div class="a" style="left:433.5px;top:309.21px;width:29.600000000000023px;height:11.03px;overflow:hidden;border-right:1px solid #e2e2e2"><div class="t" style="left:1px;top:2.6px;font-size:6.9px;transform:scaleX(0.91);transform-origin:0 0;-webkit-text-stroke:0.07px currentColor;color:#000">62,06</div></div>
<div class="a" style="left:0;top:320.24px;width:463px;height:11.03px;background:#fff;border-bottom:1px solid #e2e2e2"></div>
<div class="a" style="left:0px;top:320.24px;width:35.599999999999994px;height:11.03px;overflow:hidden;border-right:1px solid #e2e2e2"><div class="t" style="left:1px;top:2.6px;font-size:6.9px;transform:scaleX(0.91);transform-origin:0 0;-webkit-text-stroke:0.07px currentColor;color:#000">01022</div></div>
<div class="a" style="left:35.599999999999994px;top:320.24px;width:18.099999999999994px;height:11.03px;overflow:hidden;border-right:1px solid #e2e2e2"><div class="t" style="left:1px;top:2.6px;font-size:6.9px;transform:scaleX(0.91);transform-origin:0 0;-webkit-text-stroke:0.07px currentColor;color:#000">V02)</div></div>
<div class="a" style="left:53.69999999999999px;top:320.24px;width:29.30000000000001px;height:11.03px;overflow:hidden;border-right:1px solid #e2e2e2"><div class="t" style="left:1px;top:2.6px;font-size:6.9px;transform:scaleX(0.91);transform-origin:0 0;-webkit-text-stroke:0.07px currentColor;color:#000"></div></div>
<div class="a" style="left:83px;top:320.24px;width:261.8px;height:11.03px;overflow:hidden;border-right:1px solid #e2e2e2"><div class="t" style="left:1px;top:2.6px;font-size:6.9px;transform:scaleX(0.91);transform-origin:0 0;-webkit-text-stroke:0.07px currentColor;color:#000">Il passo carrabile permette ai veicoli che circolano su una strada pubblica di accedere ad un'area</div></div>
<div class="a" style="left:344.8px;top:320.24px;width:29.69999999999999px;height:11.03px;overflow:hidden;border-right:1px solid #e2e2e2"><div class="t" style="left:1px;top:2.6px;font-size:6.9px;transform:scaleX(0.91);transform-origin:0 0;-webkit-text-stroke:0.07px currentColor;color:#000">228424</div></div>
<div class="a" style="left:374.5px;top:320.24px;width:29.299999999999955px;height:11.03px;overflow:hidden;border-right:1px solid #e2e2e2"><div class="t" style="left:1px;top:2.6px;font-size:6.9px;transform:scaleX(0.91);transform-origin:0 0;-webkit-text-stroke:0.07px currentColor;color:#000">109082</div></div>
<div class="a" style="left:403.79999999999995px;top:320.24px;width:29.700000000000045px;height:11.03px;overflow:hidden;border-right:1px solid #e2e2e2"><div class="t" style="left:1px;top:2.6px;font-size:6.9px;transform:scaleX(0.91);transform-origin:0 0;-webkit-text-stroke:0.07px currentColor;color:#000">32547</div></div>
<div class="a" style="left:433.5px;top:320.24px;width:29.600000000000023px;height:11.03px;overflow:hidden;border-right:1px solid #e2e2e2"><div class="t" style="left:1px;top:2.6px;font-size:6.9px;transform:scaleX(0.91);transform-origin:0 0;-webkit-text-stroke:0.07px currentColor;color:#000">62,00</div></div>
<div class="a" style="left:0;top:331.27px;width:463px;height:11.03px;background:#fff;border-bottom:1px solid #e2e2e2"></div>
<div class="a" style="left:0px;top:331.27px;width:35.599999999999994px;height:11.03px;overflow:hidden;border-right:1px solid #e2e2e2"><div class="t" style="left:1px;top:2.6px;font-size:6.9px;transform:scaleX(0.91);transform-origin:0 0;-webkit-text-stroke:0.07px currentColor;color:#000">18018</div></div>
<div class="a" style="left:35.599999999999994px;top:331.27px;width:18.099999999999994px;height:11.03px;overflow:hidden;border-right:1px solid #e2e2e2"><div class="t" style="left:1px;top:2.6px;font-size:6.9px;transform:scaleX(0.91);transform-origin:0 0;-webkit-text-stroke:0.07px currentColor;color:#000">F08)</div></div>
<div class="a" style="left:53.69999999999999px;top:331.27px;width:29.30000000000001px;height:11.03px;overflow:hidden;border-right:1px solid #e2e2e2"><div class="t" style="left:1px;top:2.6px;font-size:6.9px;transform:scaleX(0.91);transform-origin:0 0;-webkit-text-stroke:0.07px currentColor;color:#000">704</div></div>
<div class="a" style="left:83px;top:331.27px;width:261.8px;height:11.03px;overflow:hidden;border-right:1px solid #e2e2e2"><div class="t" style="left:1px;top:2.6px;font-size:6.9px;transform:scaleX(0.91);transform-origin:0 0;-webkit-text-stroke:0.07px currentColor;color:#000">Il simbolo raffigurato è posto sulla spia luminosa che indica la temperatura dell'olio di lubrificazione</div></div>
<div class="a" style="left:344.8px;top:331.27px;width:29.69999999999999px;height:11.03px;overflow:hidden;border-right:1px solid #e2e2e2"><div class="t" style="left:1px;top:2.6px;font-size:6.9px;transform:scaleX(0.91);transform-origin:0 0;-webkit-text-stroke:0.07px currentColor;color:#000">127387</div></div>
<div class="a" style="left:374.5px;top:331.27px;width:29.299999999999955px;height:11.03px;overflow:hidden;border-right:1px solid #e2e2e2"><div class="t" style="left:1px;top:2.6px;font-size:6.9px;transform:scaleX(0.91);transform-origin:0 0;-webkit-text-stroke:0.07px currentColor;color:#000">62465</div></div>
<div class="a" style="left:403.79999999999995px;top:331.27px;width:29.700000000000045px;height:11.03px;overflow:hidden;border-right:1px solid #e2e2e2"><div class="t" style="left:1px;top:2.6px;font-size:6.9px;transform:scaleX(0.91);transform-origin:0 0;-webkit-text-stroke:0.07px currentColor;color:#000">15974</div></div>
<div class="a" style="left:433.5px;top:331.27px;width:29.600000000000023px;height:11.03px;overflow:hidden;border-right:1px solid #e2e2e2"><div class="t" style="left:1px;top:2.6px;font-size:6.9px;transform:scaleX(0.91);transform-origin:0 0;-webkit-text-stroke:0.07px currentColor;color:#000">61,58</div></div>
<div class="a" style="left:0;top:342.3px;width:463px;height:11.03px;background:#fff;border-bottom:1px solid #e2e2e2"></div>
<div class="a" style="left:0px;top:342.3px;width:35.599999999999994px;height:11.03px;overflow:hidden;border-right:1px solid #e2e2e2"><div class="t" style="left:1px;top:2.6px;font-size:6.9px;transform:scaleX(0.91);transform-origin:0 0;-webkit-text-stroke:0.07px currentColor;color:#000">01003</div></div>
<div class="a" style="left:35.599999999999994px;top:342.3px;width:18.099999999999994px;height:11.03px;overflow:hidden;border-right:1px solid #e2e2e2"><div class="t" style="left:1px;top:2.6px;font-size:6.9px;transform:scaleX(0.91);transform-origin:0 0;-webkit-text-stroke:0.07px currentColor;color:#000">F10)</div></div>
<div class="a" style="left:53.69999999999999px;top:342.3px;width:29.30000000000001px;height:11.03px;overflow:hidden;border-right:1px solid #e2e2e2"><div class="t" style="left:1px;top:2.6px;font-size:6.9px;transform:scaleX(0.91);transform-origin:0 0;-webkit-text-stroke:0.07px currentColor;color:#000">562</div></div>
<div class="a" style="left:83px;top:342.3px;width:261.8px;height:11.03px;overflow:hidden;border-right:1px solid #e2e2e2"><div class="t" style="left:1px;top:2.6px;font-size:6.9px;transform:scaleX(0.91);transform-origin:0 0;-webkit-text-stroke:0.07px currentColor;color:#000">Nella strada rappresentata, la corsia centrale è a doppio senso di circolazione</div></div>
<div class="a" style="left:344.8px;top:342.3px;width:29.69999999999999px;height:11.03px;overflow:hidden;border-right:1px solid #e2e2e2"><div class="t" style="left:1px;top:2.6px;font-size:6.9px;transform:scaleX(0.91);transform-origin:0 0;-webkit-text-stroke:0.07px currentColor;color:#000">59313</div></div>
<div class="a" style="left:374.5px;top:342.3px;width:29.299999999999955px;height:11.03px;overflow:hidden;border-right:1px solid #e2e2e2"><div class="t" style="left:1px;top:2.6px;font-size:6.9px;transform:scaleX(0.91);transform-origin:0 0;-webkit-text-stroke:0.07px currentColor;color:#000">27632</div></div>
<div class="a" style="left:403.79999999999995px;top:342.3px;width:29.700000000000045px;height:11.03px;overflow:hidden;border-right:1px solid #e2e2e2"><div class="t" style="left:1px;top:2.6px;font-size:6.9px;transform:scaleX(0.91);transform-origin:0 0;-webkit-text-stroke:0.07px currentColor;color:#000">8635</div></div>
<div class="a" style="left:433.5px;top:342.3px;width:29.600000000000023px;height:11.03px;overflow:hidden;border-right:1px solid #e2e2e2"><div class="t" style="left:1px;top:2.6px;font-size:6.9px;transform:scaleX(0.91);transform-origin:0 0;-webkit-text-stroke:0.07px currentColor;color:#000">61,15</div></div>
<div class="a" style="left:0;top:353.33px;width:463px;height:11.03px;background:#fff;border-bottom:1px solid #e2e2e2"></div>
<div class="a" style="left:0px;top:353.33px;width:35.599999999999994px;height:11.03px;overflow:hidden;border-right:1px solid #e2e2e2"><div class="t" style="left:1px;top:2.6px;font-size:6.9px;transform:scaleX(0.91);transform-origin:0 0;-webkit-text-stroke:0.07px currentColor;color:#000">11017</div></div>
<div class="a" style="left:35.599999999999994px;top:353.33px;width:18.099999999999994px;height:11.03px;overflow:hidden;border-right:1px solid #e2e2e2"><div class="t" style="left:1px;top:2.6px;font-size:6.9px;transform:scaleX(0.91);transform-origin:0 0;-webkit-text-stroke:0.07px currentColor;color:#000">F12)</div></div>
<div class="a" style="left:53.69999999999999px;top:353.33px;width:29.30000000000001px;height:11.03px;overflow:hidden;border-right:1px solid #e2e2e2"><div class="t" style="left:1px;top:2.6px;font-size:6.9px;transform:scaleX(0.91);transform-origin:0 0;-webkit-text-stroke:0.07px currentColor;color:#000"></div></div>
<div class="a" style="left:83px;top:353.33px;width:261.8px;height:11.03px;overflow:hidden;border-right:1px solid #e2e2e2"><div class="t" style="left:1px;top:2.6px;font-size:6.9px;transform:scaleX(0.91);transform-origin:0 0;-webkit-text-stroke:0.07px currentColor;color:#000">Per una maggiore sicurezza, è conveniente percorrere le lunghe discese con il cambio in folle e</div></div>
<div class="a" style="left:344.8px;top:353.33px;width:29.69999999999999px;height:11.03px;overflow:hidden;border-right:1px solid #e2e2e2"><div class="t" style="left:1px;top:2.6px;font-size:6.9px;transform:scaleX(0.91);transform-origin:0 0;-webkit-text-stroke:0.07px currentColor;color:#000">95883</div></div>
<div class="a" style="left:374.5px;top:353.33px;width:29.299999999999955px;height:11.03px;overflow:hidden;border-right:1px solid #e2e2e2"><div class="t" style="left:1px;top:2.6px;font-size:6.9px;transform:scaleX(0.91);transform-origin:0 0;-webkit-text-stroke:0.07px currentColor;color:#000">47867</div></div>
<div class="a" style="left:403.79999999999995px;top:353.33px;width:29.700000000000045px;height:11.03px;overflow:hidden;border-right:1px solid #e2e2e2"><div class="t" style="left:1px;top:2.6px;font-size:6.9px;transform:scaleX(0.91);transform-origin:0 0;-webkit-text-stroke:0.07px currentColor;color:#000">15611</div></div>
<div class="a" style="left:433.5px;top:353.33px;width:29.600000000000023px;height:11.03px;overflow:hidden;border-right:1px solid #e2e2e2"><div class="t" style="left:1px;top:2.6px;font-size:6.9px;transform:scaleX(0.91);transform-origin:0 0;-webkit-text-stroke:0.07px currentColor;color:#000">60,99</div></div>
<div class="a" style="left:0;top:0;width:463px;height:11px;background:#fff;border-bottom:1px solid #202020"></div>
<div class="a" style="left:0px;top:0;width:35.599999999999994px;height:11px;overflow:hidden;background:#f2f2f2;border-right:1px solid #303030;box-shadow:inset 1px 1px 0 #fff,inset -1px -1px 0 #b0b0b0"><div class="t" style="left:1px;top:3px;font-size:6.9px;transform:scaleX(0.91);transform-origin:0 0;-webkit-text-stroke:0.07px currentColor;color:#000">Num.ministe</div></div>
<div class="a" style="left:35.599999999999994px;top:0;width:18.099999999999994px;height:11px;overflow:hidden;background:#f2f2f2;border-right:1px solid #303030;box-shadow:inset 1px 1px 0 #fff,inset -1px -1px 0 #b0b0b0"><div class="t" style="left:1px;top:3px;font-size:6.9px;transform:scaleX(0.91);transform-origin:0 0;-webkit-text-stroke:0.07px currentColor;color:#000">V/F</div></div>
<div class="a" style="left:53.69999999999999px;top:0;width:29.30000000000001px;height:11px;overflow:hidden;background:#f2f2f2;border-right:1px solid #303030;box-shadow:inset 1px 1px 0 #fff,inset -1px -1px 0 #b0b0b0"><div class="t" style="left:1px;top:3px;font-size:6.9px;transform:scaleX(0.91);transform-origin:0 0;-webkit-text-stroke:0.07px currentColor;color:#000">Figura</div></div>
<div class="a" style="left:83px;top:0;width:261.8px;height:11px;overflow:hidden;background:#f2f2f2;border-right:1px solid #303030;box-shadow:inset 1px 1px 0 #fff,inset -1px -1px 0 #b0b0b0"><div class="t" style="left:1px;top:3px;font-size:6.9px;transform:scaleX(0.91);transform-origin:0 0;-webkit-text-stroke:0.07px currentColor;color:#000">Quiz</div></div>
<div class="a" style="left:344.8px;top:0;width:29.69999999999999px;height:11px;overflow:hidden;background:#f2f2f2;border-right:1px solid #303030;box-shadow:inset 1px 1px 0 #fff,inset -1px -1px 0 #b0b0b0"><div class="t" style="left:1px;top:3px;font-size:6.9px;transform:scaleX(0.91);transform-origin:0 0;-webkit-text-stroke:0.07px currentColor;color:#000">Tot</div></div>
<div class="a" style="left:374.5px;top:0;width:29.299999999999955px;height:11px;overflow:hidden;background:#f2f2f2;border-right:1px solid #303030;box-shadow:inset 1px 1px 0 #fff,inset -1px -1px 0 #b0b0b0"><div class="t" style="left:1px;top:3px;font-size:6.9px;transform:scaleX(0.91);transform-origin:0 0;-webkit-text-stroke:0.07px currentColor;color:#000">Err</div></div>
<div class="a" style="left:403.79999999999995px;top:0;width:29.700000000000045px;height:11px;overflow:hidden;background:#f2f2f2;border-right:1px solid #303030;box-shadow:inset 1px 1px 0 #fff,inset -1px -1px 0 #b0b0b0"><div class="t" style="left:1px;top:3px;font-size:6.9px;transform:scaleX(0.91);transform-origin:0 0;-webkit-text-stroke:0.07px currentColor;color:#000">Saltati</div></div>
<div class="a" style="left:433.5px;top:0;width:29.600000000000023px;height:11px;overflow:hidden;background:#f2f2f2;border-right:1px solid #303030;box-shadow:inset 1px 1px 0 #fff,inset -1px -1px 0 #b0b0b0"><div class="t" style="left:1px;top:3px;font-size:6.9px;transform:scaleX(0.91);transform-origin:0 0;-webkit-text-stroke:0.07px currentColor;color:#000">Media</div></div>
</div>
<div class="a" style="left:581px;top:91px;width:12px;height:360px;background:#f0f0f0;border-left:1px solid #e0e0e0"></div>
<div class="a" style="left:582px;top:102px;width:10px;height:9px;background:#cdcdcd"></div>
<svg class="a" style="left:583px;top:93px" width="8" height="7" viewBox="0 0 8 7"><path d="M1.2 4.8L4 2L6.8 4.8" stroke="#333" stroke-width="1" fill="none"/></svg>
<svg class="a" style="left:583px;top:442px" width="8" height="7" viewBox="0 0 8 7"><path d="M1.2 2.2L4 5L6.8 2.2" stroke="#333" stroke-width="1" fill="none"/></svg>
<div class="a" style="left:0;top:456.5px;width:601px;height:1.5px;background:#b8e6f6"></div><div class="a" style="left:0;top:458px;width:601px;height:1px;background:#4a8aa0"></div>
</body></html>
